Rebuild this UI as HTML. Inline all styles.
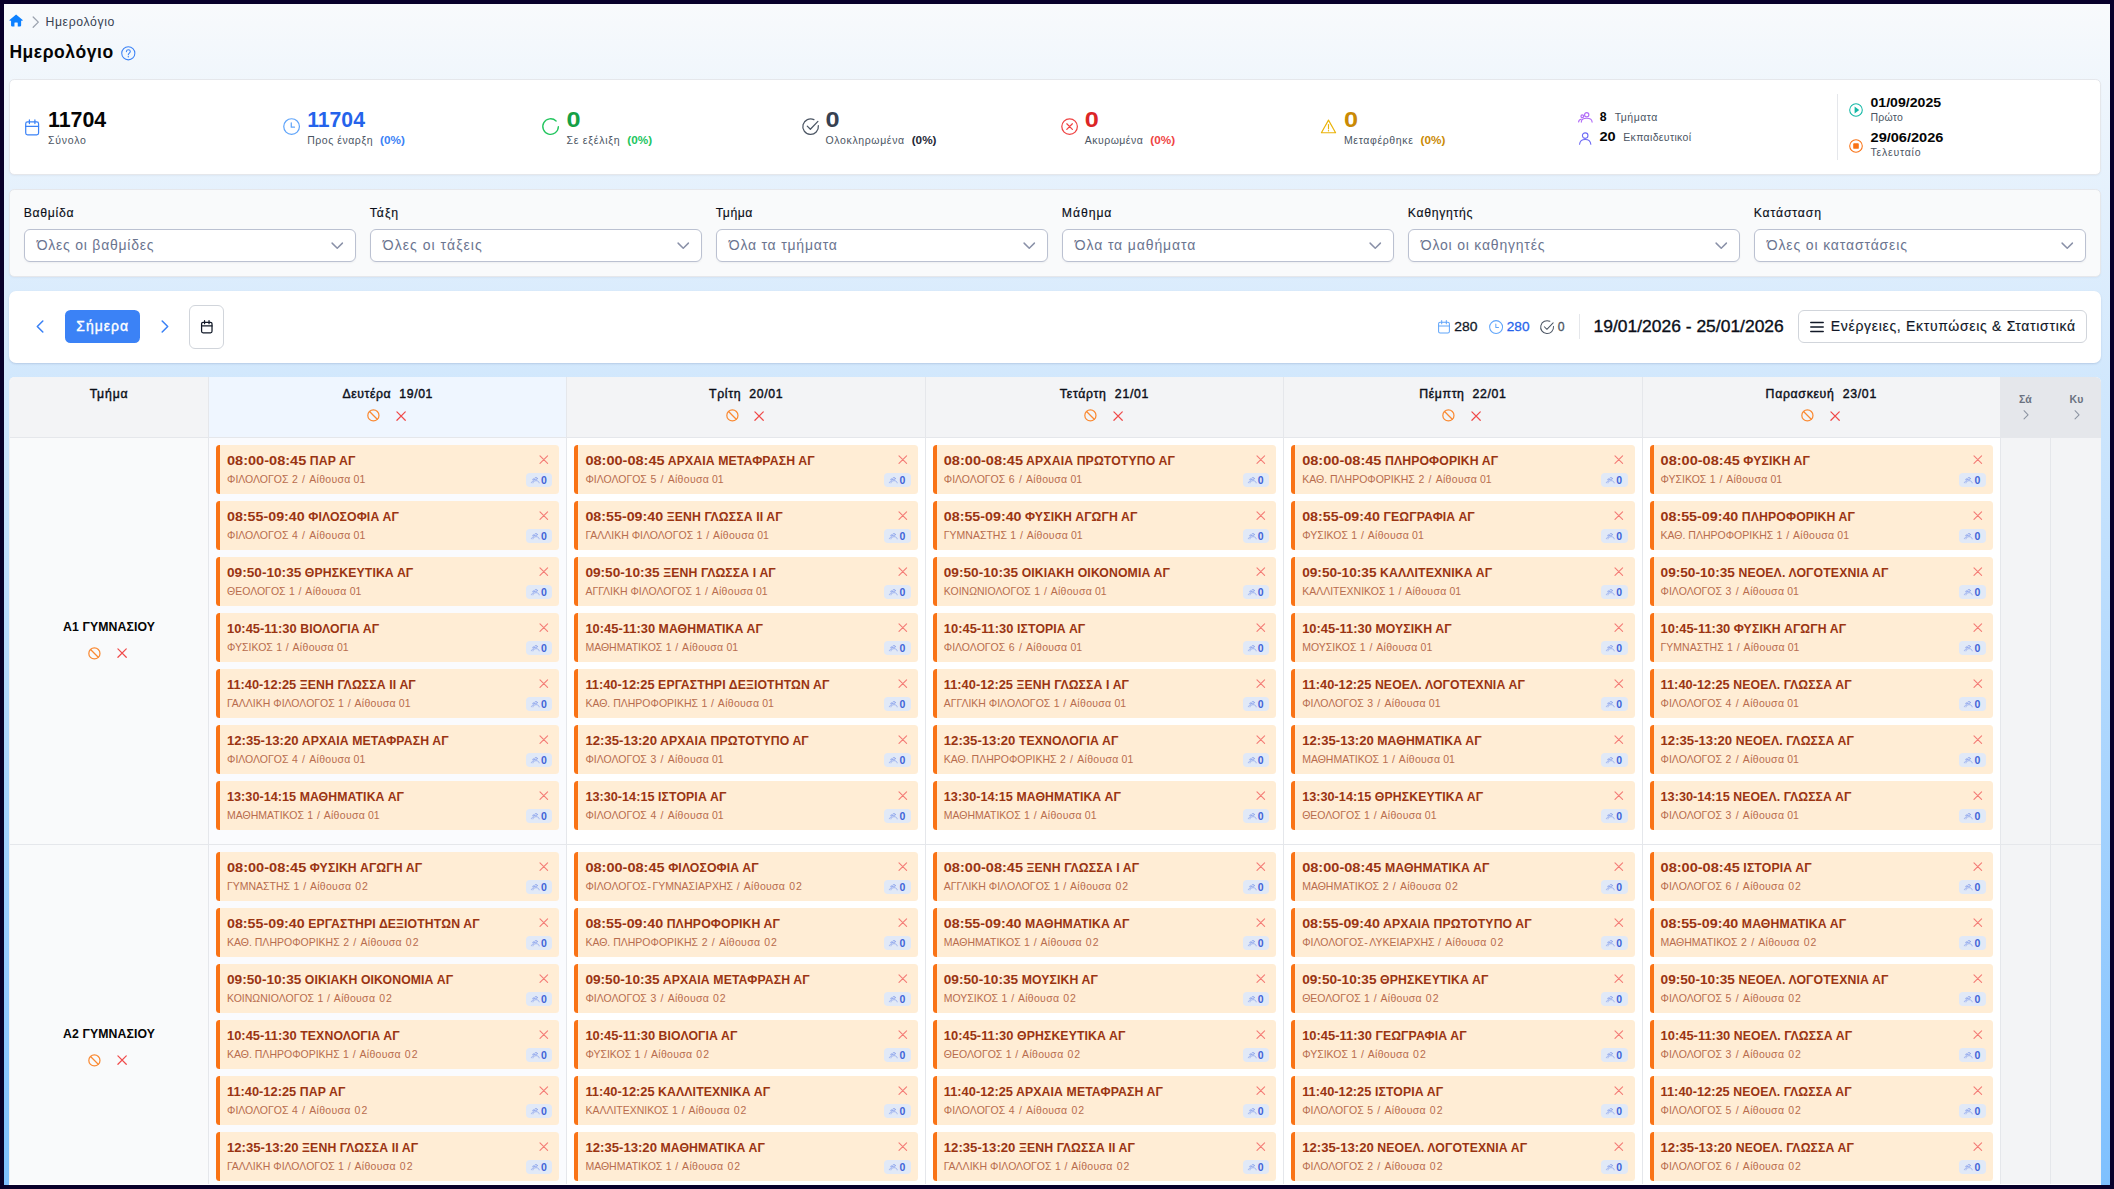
<!DOCTYPE html>
<html lang="el"><head><meta charset="utf-8"><title>Ημερολόγιο</title>
<style>
*{box-sizing:border-box;margin:0;padding:0}
html,body{width:2114px;height:1189px;overflow:hidden;background:#08002a}
body{font-family:"Liberation Sans",sans-serif;font-size:14px;color:#111827;position:relative}
svg{display:block;flex:none;overflow:visible}
.page{position:absolute;left:4px;top:4px;width:2106px;height:1181px;overflow:hidden;
 background:linear-gradient(180deg,#f8fafc 0,#7ec0fe 100%)}
.page>*{position:absolute}
/* coordinates inside .page are target coords minus 4 */
.bc{left:5px;top:11px;height:14px;display:flex;align-items:center;font-size:12.25px;color:#374151}
.ihome{width:14.2px;height:12.6px;color:#0d80ff;margin-top:-4px}
.bcch{width:7.6px;height:12.2px;color:#9ca3af;margin-left:8.7px;margin-right:6px}
.bc span{line-height:14px}
.ttl{left:5.4px;top:36px;height:24px;display:flex;align-items:center}
.ttl h1{font-size:17.5px;font-weight:700;color:#050505;line-height:24px}
.ihelp{width:14.6px;height:14.6px;color:#3b82f6;margin-left:7.6px;margin-top:2px}
.card{left:5.25px;width:2091.5px;border-radius:5.250px;background:#fff;border:1px solid #e5e7eb;box-shadow:0 1px 2px rgba(15,23,42,.04)}
.stats{top:75.400px;height:95.600px}
.filters{top:185.300px;height:88px;background:#f9fafb;border-color:#e5e7eb}
.toolbar{top:287px;height:72px;border:0;border-radius:7px;box-shadow:0 1px 2px rgba(30,58,110,.16)}
.st{position:absolute;top:1px;height:93px;display:flex;align-items:flex-start}
.si{width:17.200px;height:17.200px;margin-right:6.900px;margin-top:36.700px}
.si.cal{width:14.300px;height:16.700px;margin-left:1.450px;margin-right:8.350px;margin-top:37.200px}
.sv{display:block}
.sx{display:inline-block;line-height:0;transform-origin:0 .3465em}
.sn{font-size:21.500px;font-weight:700;line-height:24px;margin-top:26.900px;white-space:nowrap}
.sl{font-size:10.5px;line-height:14px;color:#4b5563;margin-top:1.200px;white-space:nowrap}
.pc{font-weight:700;margin-left:7px}
.s1{left:13.650px}.s1 .si{color:#3b82f6}.s1 .sn{color:#050505}
.s2{left:272.850px}.s2 .si{color:#60a5fa}.s2 .sn{color:#2563eb}.s2 .pc{color:#3b82f6}
.s3{left:532.050px}.s3 .si{color:#22c55e}.s3 .sn{color:#15a045}.s3 .pc{color:#22c55e}
.s4{left:791.250px}.s4 .si{color:#4b5563}.s4 .sn{color:#374151}.s4 .pc{color:#1f2937}
.s5{left:1050.450px}.s5 .si{color:#ef4444}.s5 .sn{color:#dc2626}.s5 .pc{color:#ef4444}
.s6{left:1309.650px}.s6 .si{color:#eab308}.s6 .sn{color:#ca8a04}.s6 .pc{color:#ca8a04}
.s6 .si{width:17px;height:15px;margin-top:37.900px;margin-right:7.100px}
.s7{left:1568px;display:block}
.s7 .ln{position:absolute;left:0;display:flex;align-items:center;height:14px;font-size:10.5px;line-height:14px;color:#4b5563;white-space:nowrap}
.s7 .ln:nth-child(1){top:28.200px}.s7 .ln:nth-child(2){top:48.900px}
.s7 .ui{width:14.800px;height:10.600px;margin-right:6.800px;position:relative;top:.6px}
.s7 .ui.in{width:14.400px;height:12.900px;margin-right:6.800px;top:1.100px}
.s7 .pu{color:#b26cf7}.s7 .in{color:#6d6af5}
.s7 b{font-size:12.25px;color:#050505;margin-right:8px}
.s7 .ln:nth-child(2) b{margin-right:7.600px}
.s8{left:1826.600px;top:14px;height:66px;width:200px;border-left:1px solid #e5e7eb;display:block}
.s8 .dl{position:absolute;left:11.100px;display:flex;align-items:center;height:30px}
.s8 .dl:nth-child(1){top:0}.s8 .dl:nth-child(2){top:35.200px}
.s8 .di{width:14px;height:14px;margin-right:7.600px;margin-top:2px}
.s8 .teal{color:#14b8a6}.s8 .org{color:#f97316}
.s8 b{position:relative;top:1px;display:block;font-size:12.25px;line-height:15px;color:#050505;white-space:nowrap}
.s8 .lb{display:block;font-size:10.5px;line-height:14px;color:#4b5563;white-space:nowrap}
/* filters */
.fl{position:absolute;top:0;width:332px}
.fl:nth-child(1){left:13.500px}.fl:nth-child(2){left:359.500px}.fl:nth-child(3){left:705.500px}.fl:nth-child(4){left:1051.500px}.fl:nth-child(5){left:1397.500px}.fl:nth-child(6){left:1743.500px}
.fl label{position:absolute;left:0;top:14.500px;font-size:12.25px;line-height:16px;color:#0b0f19;-webkit-text-stroke:.15px #0b0f19;white-space:nowrap}
.sel{position:absolute;left:0;top:39px;width:332px;height:33px;border:1px solid #bbc1d1;border-radius:6px;background:#fff;box-shadow:0 1px 2px rgba(15,23,42,.05)}
.sel .ph{position:absolute;left:12px;top:0;line-height:31px;font-size:14px;color:#6b7590;white-space:nowrap}
.chd{position:absolute;right:11px;top:11.300px;width:12.500px;height:7.500px;color:#8a91a8}
/* toolbar */
.tl{position:absolute;left:.9px;top:0;height:70px;width:400px}
.tl>*{position:absolute}
.nav{width:8px;height:13px;color:#3b82f6;top:28.500px}
.tl .nav:nth-of-type(1){left:26px}
.tl .nav:nth-of-type(2){left:151px}
.today{left:55px;top:18.500px;width:75px;height:33px;border:0;border-radius:5.500px;background:#3b82f6;color:#fff;font-family:inherit;font-size:14px;font-weight:400;-webkit-text-stroke:.35px #fff;text-align:center;line-height:32px}
.calbtn{left:179px;top:13.500px;width:35px;height:44.500px;border:1px solid #d1d5db;border-radius:6px;background:#fff}
.cb{position:absolute;left:10.400px;top:14px;width:11.600px;height:13.500px;color:#111827}
.trr{position:absolute;right:13.500px;top:0;height:70px;display:flex;align-items:center}
.m{display:flex;align-items:center;font-size:12.25px;margin-right:10.500px;position:relative;top:1px}
.m b{font-weight:400;-webkit-text-stroke:.3px currentColor;margin-left:3.500px}
.mi{width:14.200px;height:14.200px}
.m1{margin-right:11.600px}.m1 .mi{width:12px;height:13.700px;margin:0 1.100px;color:#60a5fa}.m1 b{color:#111827}
.m2 .mi{color:#60a5fa}.m2 b{color:#2563eb}
.m3 .mi{color:#4b5563}.m3 b{color:#4b5563}
.vd{width:1px;height:25px;background:#e5e7eb;margin:0 14px 0 3.500px;position:relative;top:0}
.range{font-size:15.75px;color:#0b0f19;-webkit-text-stroke:.35px #0b0f19;white-space:nowrap;margin-right:14px}
.actbtn{height:33px;border:1px solid #d1d5db;border-radius:6px;background:#fff;display:flex;align-items:center;padding:0 10.500px 0 11px;font-size:14px;color:#111827;white-space:nowrap}
.actbtn span{-webkit-text-stroke:.15px #111827}
.bars{width:14px;height:12px;margin-right:7px;color:#111827;position:relative;top:.8px}
/* table */
.tbl{left:5.250px;top:373px;width:2091.500px;height:900px;border-radius:5.250px 5.250px 0 0;overflow:hidden;background:#fff;border-left:1px solid #eef0f3}
.tr{display:flex;width:2091.500px;border-bottom:1px solid #e5e7eb}
.tc{flex:none;border-right:1px solid #e5e7eb}
.c0{width:198.750px;background:#f9fafb;display:flex;flex-direction:column;align-items:center;justify-content:center}
.cd{width:358.400px;padding:7px 7px 0 7px;background:#fff}
.cd.first{background:#fafbfe}
.we{width:50px;background:#f3f4f6}
.we:last-child{border-right:0;width:51px}
.hd{height:61px}
.hd .tc{background:#f3f4f6;padding:0;display:block;text-align:center}
.hd .cd.first{background:#eff6ff}
.hd .we{background:#e5e7eb;border-right-color:#e5e7eb}
.hn{font-size:12.25px;font-weight:400;-webkit-text-stroke:.42px #0b0f19;line-height:16px;color:#0b0f19;margin-top:8.600px;white-space:pre}
.ga{display:flex;justify-content:center;align-items:center;margin-top:7.500px;height:13px}
.iban{width:12.800px;height:12.800px;color:#fa8a33;margin:0 7.700px}
.ix{width:10.200px;height:10.200px;color:#f04a4a;margin:0 9.700px 0 8.300px}
.wn{font-size:10.500px;font-weight:700;color:#6b7280;line-height:13px;margin-top:16px}
.wch{width:6.200px;height:9.600px;color:#8b93a1;margin:3.600px auto 0;position:relative;left:1px}
.r1{height:407px}.r2{height:407px}
.gn{font-size:12.25px;font-weight:700;color:#050505;line-height:16px;margin-top:-3px;position:relative;top:-.8px;letter-spacing:.12px}
.tr .c0 .ga{margin-top:10.800px;position:relative;left:-.6px;top:.3px}
.ev{position:relative;height:48.500px;margin-bottom:7.500px;background:#ffedd5;border-left:4px solid #f97316;border-radius:3.500px;padding:0 0 0 7px}
.et{font-size:12.25px;font-weight:700;color:#9a3412;line-height:16px;padding-top:7.800px;white-space:nowrap;letter-spacing:.12px}
.tm{display:inline-block;line-height:0;transform-origin:0 .3465em;letter-spacing:0}
.es{font-size:10.500px;color:#b86c4d;line-height:14px;margin-top:3px;white-space:pre}
.es i{font-style:normal}.hy{letter-spacing:1.400px;margin-left:.7px}.d1{letter-spacing:.45px}.dn{letter-spacing:.66px}.lc{letter-spacing:.3px}.rb{letter-spacing:1px}
.ex{position:absolute;right:10.600px;top:10.100px;width:9.600px;height:9.300px;color:#f47c76}
.bd{position:absolute;right:7px;top:28px;width:26.600px;height:14px;border-radius:4px;background:#e1e9f7;display:flex;align-items:center;padding-left:5.100px;color:#4164d7}
.bu{width:8.600px;height:6.200px;color:#8aa2ec;margin-right:1.500px;margin-top:-.5px}
.bd b{font-size:10.500px;line-height:14px;font-weight:700}
.wl{left:5.250px;top:1180px;width:2091.500px;height:1px;background:#fff;z-index:5}

</style></head>
<body>
<div class="page">
<div class="bc"><svg class="ihome" viewBox="0 0 14 13" ><path d="M7 .4L.2 6.300c-.2.200-.1.600.2.600H1.800v5c0 .5.400.9.900.9h2.600V9.200c0-.3.200-.5.500-.5h2.400c.3 0 .5.200.5.500v3.600h2.600c.5 0 .9-.4.900-.9v-5h1.400c.3 0 .4-.4.200-.6z" fill="currentColor"/></svg><svg class="bcch" viewBox="0 0 8 13" ><path d="M1.200 1l5.500 5.500-5.500 5.500" fill="none" stroke="currentColor" stroke-linecap="round" stroke-linejoin="round" stroke-width="1.350"/></svg><span class="" style="letter-spacing:0.619px">Ημερολόγιο</span></div>
<div class="ttl"><h1><span class="" style="letter-spacing:0.56px">Ημερολόγιο</span></h1><svg class="ihelp" viewBox="0 0 16 16" ><circle cx="8" cy="8" r="7.200" fill="none" stroke="currentColor" stroke-linecap="round" stroke-linejoin="round" stroke-width="1.150"/><path d="M5.900 6.200c.1-1.300 1-2 2.200-2 1.200 0 2.100.8 2.100 1.900 0 1.700-2.200 1.700-2.200 3.500" fill="none" stroke="currentColor" stroke-linecap="round" stroke-linejoin="round" stroke-width="1.150"/><circle cx="8" cy="11.800" r=".75" fill="currentColor"/></svg></div>
<div class="card stats">
<div class="st s1"><svg class="si cal" viewBox="0 0 14 16" ><rect x=".7" y="2.600" width="12.600" height="12.700" rx="1.800" fill="none" stroke="currentColor" stroke-linecap="round" stroke-linejoin="round" stroke-width="1.2"/><path d="M.7 7h12.600M4.300 .7v3.600M9.700 .7v3.600" fill="none" stroke="currentColor" stroke-linecap="round" stroke-linejoin="round" stroke-width="1.2"/></svg><div class="sv"><div class="sn"><span class="sx " style="font-size:21.389px;transform:scaleY(1.0052)">11704</span></div><div class="sl"><span class="" style="letter-spacing:0.769px">Σύνολο</span></div></div></div>
<div class="st s2"><svg class="si" viewBox="0 0 16 16" ><circle cx="8" cy="8" r="7.300" fill="none" stroke="currentColor" stroke-linecap="round" stroke-linejoin="round" stroke-width="1.150"/><path d="M7.700 4.500v4h3" fill="none" stroke="currentColor" stroke-linecap="round" stroke-linejoin="round" stroke-width="1.150"/></svg><div class="sv"><div class="sn"><span class="sx " style="font-size:21.201px;transform:scaleY(1.0141)">11704</span></div><div class="sl"><span class="" style="letter-spacing:0.541px">Προς έναρξη</span><span class="sx pc" style="font-size:11.757px;transform:scaleY(0.8931)">(0%)</span></div></div></div>
<div class="st s3"><svg class="si" viewBox="0 0 16 16" ><path d="M13.130 2.870A7.250 7.250 0 1 0 15.250 8" fill="none" stroke="currentColor" stroke-linecap="round" stroke-linejoin="round" stroke-width="1.250"/></svg><div class="sv"><div class="sn"><span class="sx " style="font-size:25.301px;transform:scaleY(0.8498)">0</span></div><div class="sl"><span class="" style="letter-spacing:0.769px">Σε εξέλιξη</span><span class="sx pc" style="font-size:11.757px;transform:scaleY(0.8931)">(0%)</span></div></div></div>
<div class="st s4"><svg class="si" viewBox="0 0 16 16" ><path d="M15.200 7.200a7.250 7.250 0 1 1-4.100-5.700" fill="none" stroke="currentColor" stroke-linecap="round" stroke-linejoin="round" stroke-width="1.150"/><path d="M4.900 7.600l2.900 2.900 7-7.300" fill="none" stroke="currentColor" stroke-linecap="round" stroke-linejoin="round" stroke-width="1.150"/></svg><div class="sv"><div class="sn"><span class="sx " style="font-size:25.301px;transform:scaleY(0.8498)">0</span></div><div class="sl"><span class="" style="letter-spacing:0.622px">Ολοκληρωμένα</span><span class="sx pc" style="font-size:11.757px;transform:scaleY(0.8931)">(0%)</span></div></div></div>
<div class="st s5"><svg class="si" viewBox="0 0 16 16" ><circle cx="8" cy="8" r="7.250" fill="none" stroke="currentColor" stroke-linecap="round" stroke-linejoin="round" stroke-width="1.150"/><path d="M5.400 5.400l5.200 5.200M10.600 5.400l-5.200 5.200" fill="none" stroke="currentColor" stroke-linecap="round" stroke-linejoin="round" stroke-width="1.150"/></svg><div class="sv"><div class="sn"><span class="sx " style="font-size:25.301px;transform:scaleY(0.8498)">0</span></div><div class="sl"><span class="" style="letter-spacing:0.473px">Ακυρωμένα</span><span class="sx pc" style="font-size:11.757px;transform:scaleY(0.8931)">(0%)</span></div></div></div>
<div class="st s6"><svg class="si" viewBox="0 0 16 15" ><path d="M8 1.100L.9 13.700h14.200z" fill="none" stroke="currentColor" stroke-linecap="round" stroke-linejoin="round" stroke-width="1.150"/><path d="M8 5.600v4.200" fill="none" stroke="currentColor" stroke-linecap="round" stroke-linejoin="round" stroke-width="1.150"/><circle cx="8" cy="11.700" r=".7" fill="currentColor"/></svg><div class="sv"><div class="sn"><span class="sx " style="font-size:25.301px;transform:scaleY(0.8498)">0</span></div><div class="sl"><span class="" style="letter-spacing:0.633px">Μεταφέρθηκε</span><span class="sx pc" style="font-size:11.757px;transform:scaleY(0.8931)">(0%)</span></div></div></div>
<div class="st s7"><div class="ln"><svg class="ui pu" viewBox="0 0 14.8 10.6" ><circle cx="8.700" cy="2.750" r="2.150" fill="none" stroke="currentColor" stroke-linecap="round" stroke-linejoin="round" stroke-width="1.150"/><path d="M3.300 10.100c.1-2.400 2.400-3.800 5.400-3.800s5.300 1.400 5.400 3.800" fill="none" stroke="currentColor" stroke-linecap="round" stroke-linejoin="round" stroke-width="1.150"/><circle cx="4.300" cy="4.300" r="1.350" fill="none" stroke="currentColor" stroke-linecap="round" stroke-linejoin="round" stroke-width="1.150"/><path d="M.6 9.900c.1-1.500 1.100-2.500 2.700-2.700" fill="none" stroke="currentColor" stroke-linecap="round" stroke-linejoin="round" stroke-width="1.150"/></svg><b>8</b><span class="" style="letter-spacing:0.496px">Τμήματα</span></div><div class="ln"><svg class="ui in" viewBox="0 0 14 14" ><circle cx="7" cy="3.900" r="3" fill="none" stroke="currentColor" stroke-linecap="round" stroke-linejoin="round" stroke-width="1.2"/><path d="M.9 13.300c.3-3.300 2.800-5.200 6.100-5.200s5.800 1.900 6.100 5.200" fill="none" stroke="currentColor" stroke-linecap="round" stroke-linejoin="round" stroke-width="1.200"/></svg><b><span class="sx " style="font-size:14.583px;transform:scaleY(0.8400)">20</span></b><span class="" style="letter-spacing:0.334px">Εκπαιδευτικοί</span></div></div>
<div class="st s8"><div class="dl"><svg class="di teal" viewBox="0 0 16 16" ><circle cx="8" cy="8" r="7.200" fill="none" stroke="currentColor" stroke-linecap="round" stroke-linejoin="round" stroke-width="1.200"/><path d="M6.400 4v8l5.300-4z" fill="currentColor"/></svg><div><b><span class="sx " style="font-size:14.104px;transform:scaleY(0.8686)">01/09/2025</span></b><span class="lb" style="letter-spacing:0.189px">Πρώτο</span></div></div><div class="dl"><svg class="di org" viewBox="0 0 16 16" ><circle cx="8" cy="8" r="7.200" fill="none" stroke="currentColor" stroke-linecap="round" stroke-linejoin="round" stroke-width="1.200"/><rect x="4.800" y="4.800" width="6.400" height="6.400" rx="1" fill="currentColor"/></svg><div><b><span class="sx " style="font-size:14.570px;transform:scaleY(0.8408)">29/06/2026</span></b><span class="lb" style="letter-spacing:0.768px">Τελευταίο</span></div></div></div>
</div>
<div class="card filters">
<div class="fl"><label><span class="" style="letter-spacing:0.676px">Βαθμίδα</span></label><div class="sel"><span class="ph" style="letter-spacing:0.76px">Όλες οι βαθμίδες</span><svg class="chd" viewBox="0 0 13 8" ><path d="M1 1.200l5.500 5.500L12 1.200" fill="none" stroke="currentColor" stroke-linecap="round" stroke-linejoin="round" stroke-width="1.550"/></svg></div></div>
<div class="fl"><label><span class="" style="letter-spacing:0.961px">Τάξη</span></label><div class="sel"><span class="ph" style="letter-spacing:1.046px">Όλες οι τάξεις</span><svg class="chd" viewBox="0 0 13 8" ><path d="M1 1.200l5.500 5.500L12 1.200" fill="none" stroke="currentColor" stroke-linecap="round" stroke-linejoin="round" stroke-width="1.550"/></svg></div></div>
<div class="fl"><label><span class="" style="letter-spacing:0.526px">Τμήμα</span></label><div class="sel"><span class="ph" style="letter-spacing:0.785px">Όλα τα τμήματα</span><svg class="chd" viewBox="0 0 13 8" ><path d="M1 1.200l5.500 5.500L12 1.200" fill="none" stroke="currentColor" stroke-linecap="round" stroke-linejoin="round" stroke-width="1.550"/></svg></div></div>
<div class="fl"><label><span class="" style="letter-spacing:0.93px">Μάθημα</span></label><div class="sel"><span class="ph" style="letter-spacing:0.882px">Όλα τα μαθήματα</span><svg class="chd" viewBox="0 0 13 8" ><path d="M1 1.200l5.500 5.500L12 1.200" fill="none" stroke="currentColor" stroke-linecap="round" stroke-linejoin="round" stroke-width="1.550"/></svg></div></div>
<div class="fl"><label><span class="" style="letter-spacing:0.672px">Καθηγητής</span></label><div class="sel"><span class="ph" style="letter-spacing:0.794px">Όλοι οι καθηγητές</span><svg class="chd" viewBox="0 0 13 8" ><path d="M1 1.200l5.500 5.500L12 1.200" fill="none" stroke="currentColor" stroke-linecap="round" stroke-linejoin="round" stroke-width="1.550"/></svg></div></div>
<div class="fl"><label><span class="" style="letter-spacing:0.833px">Κατάσταση</span></label><div class="sel"><span class="ph" style="letter-spacing:0.863px">Όλες οι καταστάσεις</span><svg class="chd" viewBox="0 0 13 8" ><path d="M1 1.200l5.500 5.500L12 1.200" fill="none" stroke="currentColor" stroke-linecap="round" stroke-linejoin="round" stroke-width="1.550"/></svg></div></div>
</div>
<div class="card toolbar">
<div class="tl"><svg class="nav" viewBox="0 0 8 13" ><path d="M6.800 1L1.300 6.500l5.500 5.500" fill="none" stroke="currentColor" stroke-linecap="round" stroke-linejoin="round" stroke-width="1.550"/></svg><button class="today"><span class="" style="letter-spacing:0.999px">Σήμερα</span></button><svg class="nav" viewBox="0 0 8 13" ><path d="M1.200 1l5.500 5.500-5.500 5.500" fill="none" stroke="currentColor" stroke-linecap="round" stroke-linejoin="round" stroke-width="1.550"/></svg><div class="calbtn"><svg class="cb" viewBox="0 0 14 16" ><rect x=".7" y="2.600" width="12.600" height="12.700" rx="1.800" fill="none" stroke="currentColor" stroke-linecap="round" stroke-linejoin="round" stroke-width="1.500"/><path d="M.7 7h12.600M4.300 .7v3.600M9.700 .7v3.600" fill="none" stroke="currentColor" stroke-linecap="round" stroke-linejoin="round" stroke-width="1.500"/></svg></div></div>
<div class="trr"><span class="m m1"><svg class="mi" viewBox="0 0 14 16" ><rect x=".7" y="2.600" width="12.600" height="12.700" rx="1.800" fill="none" stroke="currentColor" stroke-linecap="round" stroke-linejoin="round" stroke-width="1.2"/><path d="M.7 7h12.600M4.300 .7v3.600M9.700 .7v3.600" fill="none" stroke="currentColor" stroke-linecap="round" stroke-linejoin="round" stroke-width="1.2"/></svg><b><span class="sx " style="font-size:13.888px;transform:scaleY(0.8820)">280</span></b></span><span class="m m2"><svg class="mi" viewBox="0 0 16 16" ><circle cx="8" cy="8" r="7.300" fill="none" stroke="currentColor" stroke-linecap="round" stroke-linejoin="round" stroke-width="1.150"/><path d="M7.700 4.500v4h3" fill="none" stroke="currentColor" stroke-linecap="round" stroke-linejoin="round" stroke-width="1.150"/></svg><b><span class="sx " style="font-size:13.638px;transform:scaleY(0.8982)">280</span></b></span><span class="m m3"><svg class="mi" viewBox="0 0 16 16" ><path d="M15.200 7.200a7.250 7.250 0 1 1-4.100-5.700" fill="none" stroke="currentColor" stroke-linecap="round" stroke-linejoin="round" stroke-width="1.150"/><path d="M4.900 7.600l2.900 2.900 7-7.300" fill="none" stroke="currentColor" stroke-linecap="round" stroke-linejoin="round" stroke-width="1.150"/></svg><b>0</b></span><span class="vd"></span><span class="sx range" style="font-size:17.463px;transform:scaleY(0.9019)">19/01/2026 - 25/01/2026</span><div class="actbtn"><svg class="bars" viewBox="0 0 14 12" ><path d="M.8 1.600h12.400M.8 6h12.400M.8 10.400h12.400" fill="none" stroke="currentColor" stroke-linecap="round" stroke-linejoin="round" stroke-width="1.500"/></svg><span class="" style="letter-spacing:0.685px">Ενέργειες, Εκτυπώσεις &amp; Στατιστικά</span></div></div>
</div>
<div class="tbl">
<div class="tr hd"><div class="tc c0"><div class="hn"><span class="" style="letter-spacing:0.851px">Τμήμα</span></div></div>
<div class="tc cd first"><div class="hn"><span class="" style="letter-spacing:0.603px">Δευτέρα  19/01</span></div><div class="ga"><svg class="iban" viewBox="0 0 14 14" ><circle cx="7" cy="7" r="6.100" fill="none" stroke="currentColor" stroke-linecap="round" stroke-linejoin="round" stroke-width="1.350"/><path d="M2.800 2.800l8.400 8.400" fill="none" stroke="currentColor" stroke-linecap="round" stroke-linejoin="round" stroke-width="1.350"/></svg><svg class="ix" viewBox="0 0 10 10" ><path d="M.9 .9l8.200 8.200M9.100 .9l-8.200 8.200" fill="none" stroke="currentColor" stroke-linecap="round" stroke-linejoin="round" stroke-width="1.200"/></svg></div></div>
<div class="tc cd"><div class="hn"><span class="" style="letter-spacing:0.656px">Τρίτη  20/01</span></div><div class="ga"><svg class="iban" viewBox="0 0 14 14" ><circle cx="7" cy="7" r="6.100" fill="none" stroke="currentColor" stroke-linecap="round" stroke-linejoin="round" stroke-width="1.350"/><path d="M2.800 2.800l8.400 8.400" fill="none" stroke="currentColor" stroke-linecap="round" stroke-linejoin="round" stroke-width="1.350"/></svg><svg class="ix" viewBox="0 0 10 10" ><path d="M.9 .9l8.200 8.200M9.100 .9l-8.200 8.200" fill="none" stroke="currentColor" stroke-linecap="round" stroke-linejoin="round" stroke-width="1.200"/></svg></div></div>
<div class="tc cd"><div class="hn"><span class="" style="letter-spacing:0.711px">Τετάρτη  21/01</span></div><div class="ga"><svg class="iban" viewBox="0 0 14 14" ><circle cx="7" cy="7" r="6.100" fill="none" stroke="currentColor" stroke-linecap="round" stroke-linejoin="round" stroke-width="1.350"/><path d="M2.800 2.800l8.400 8.400" fill="none" stroke="currentColor" stroke-linecap="round" stroke-linejoin="round" stroke-width="1.350"/></svg><svg class="ix" viewBox="0 0 10 10" ><path d="M.9 .9l8.200 8.200M9.100 .9l-8.200 8.200" fill="none" stroke="currentColor" stroke-linecap="round" stroke-linejoin="round" stroke-width="1.200"/></svg></div></div>
<div class="tc cd"><div class="hn"><span class="" style="letter-spacing:0.631px">Πέμπτη  22/01</span></div><div class="ga"><svg class="iban" viewBox="0 0 14 14" ><circle cx="7" cy="7" r="6.100" fill="none" stroke="currentColor" stroke-linecap="round" stroke-linejoin="round" stroke-width="1.350"/><path d="M2.800 2.800l8.400 8.400" fill="none" stroke="currentColor" stroke-linecap="round" stroke-linejoin="round" stroke-width="1.350"/></svg><svg class="ix" viewBox="0 0 10 10" ><path d="M.9 .9l8.200 8.200M9.100 .9l-8.200 8.200" fill="none" stroke="currentColor" stroke-linecap="round" stroke-linejoin="round" stroke-width="1.200"/></svg></div></div>
<div class="tc cd"><div class="hn"><span class="" style="letter-spacing:0.7px">Παρασκευή  23/01</span></div><div class="ga"><svg class="iban" viewBox="0 0 14 14" ><circle cx="7" cy="7" r="6.100" fill="none" stroke="currentColor" stroke-linecap="round" stroke-linejoin="round" stroke-width="1.350"/><path d="M2.800 2.800l8.400 8.400" fill="none" stroke="currentColor" stroke-linecap="round" stroke-linejoin="round" stroke-width="1.350"/></svg><svg class="ix" viewBox="0 0 10 10" ><path d="M.9 .9l8.200 8.200M9.100 .9l-8.200 8.200" fill="none" stroke="currentColor" stroke-linecap="round" stroke-linejoin="round" stroke-width="1.200"/></svg></div></div>
<div class="tc we"><div class="wn">Σά</div><svg class="wch" viewBox="0 0 8 13" ><path d="M1.200 1l5.500 5.500-5.500 5.500" fill="none" stroke="currentColor" stroke-linecap="round" stroke-linejoin="round" stroke-width="1.400"/></svg></div><div class="tc we"><div class="wn">Κυ</div><svg class="wch" viewBox="0 0 8 13" ><path d="M1.200 1l5.500 5.500-5.500 5.500" fill="none" stroke="currentColor" stroke-linecap="round" stroke-linejoin="round" stroke-width="1.400"/></svg></div>
</div>
<div class="tr r1">
<div class="tc c0"><div class="gn">Α1 ΓΥΜΝΑΣΙΟΥ</div><div class="ga"><svg class="iban" viewBox="0 0 14 14" ><circle cx="7" cy="7" r="6.100" fill="none" stroke="currentColor" stroke-linecap="round" stroke-linejoin="round" stroke-width="1.350"/><path d="M2.800 2.800l8.400 8.400" fill="none" stroke="currentColor" stroke-linecap="round" stroke-linejoin="round" stroke-width="1.350"/></svg><svg class="ix" viewBox="0 0 10 10" ><path d="M.9 .9l8.200 8.200M9.100 .9l-8.200 8.200" fill="none" stroke="currentColor" stroke-linecap="round" stroke-linejoin="round" stroke-width="1.200"/></svg></div></div>
<div class="tc cd first">
<div class="ev"><div class="et"><span class="tm" style="font-size:14.568px;transform:scaleY(0.8409)">08:00-08:45</span> ΠΑΡ ΑΓ</div><div class="es">ΦΙΛΟΛΟΓΟΣ<i class="dn"> 2 / </i><i class="lc">Αίθουσα</i><i class="ra"> 01</i></div><svg class="ex" viewBox="0 0 10 10" ><path d="M.9 .9l8.200 8.200M9.100 .9l-8.200 8.200" fill="none" stroke="currentColor" stroke-linecap="round" stroke-linejoin="round" stroke-width="1.200"/></svg><span class="bd"><svg class="bu" viewBox="0 0 14.8 10.6" ><circle cx="8.700" cy="2.750" r="2.150" fill="none" stroke="currentColor" stroke-linecap="round" stroke-linejoin="round" stroke-width="1.250"/><path d="M3.300 10.100c.1-2.400 2.400-3.800 5.400-3.800s5.300 1.400 5.400 3.800" fill="none" stroke="currentColor" stroke-linecap="round" stroke-linejoin="round" stroke-width="1.250"/><circle cx="4.300" cy="4.300" r="1.350" fill="none" stroke="currentColor" stroke-linecap="round" stroke-linejoin="round" stroke-width="1.250"/><path d="M.6 9.900c.1-1.500 1.100-2.500 2.700-2.700" fill="none" stroke="currentColor" stroke-linecap="round" stroke-linejoin="round" stroke-width="1.250"/></svg><b>0</b></span></div>
<div class="ev"><div class="et"><span class="tm" style="font-size:14.289px;transform:scaleY(0.8573)">08:55-09:40</span> ΦΙΛΟΣΟΦΙΑ ΑΓ</div><div class="es">ΦΙΛΟΛΟΓΟΣ<i class="dn"> 4 / </i><i class="lc">Αίθουσα</i><i class="ra"> 01</i></div><svg class="ex" viewBox="0 0 10 10" ><path d="M.9 .9l8.200 8.200M9.100 .9l-8.200 8.200" fill="none" stroke="currentColor" stroke-linecap="round" stroke-linejoin="round" stroke-width="1.200"/></svg><span class="bd"><svg class="bu" viewBox="0 0 14.8 10.6" ><circle cx="8.700" cy="2.750" r="2.150" fill="none" stroke="currentColor" stroke-linecap="round" stroke-linejoin="round" stroke-width="1.250"/><path d="M3.300 10.100c.1-2.400 2.400-3.800 5.400-3.800s5.300 1.400 5.400 3.800" fill="none" stroke="currentColor" stroke-linecap="round" stroke-linejoin="round" stroke-width="1.250"/><circle cx="4.300" cy="4.300" r="1.350" fill="none" stroke="currentColor" stroke-linecap="round" stroke-linejoin="round" stroke-width="1.250"/><path d="M.6 9.900c.1-1.500 1.100-2.500 2.700-2.700" fill="none" stroke="currentColor" stroke-linecap="round" stroke-linejoin="round" stroke-width="1.250"/></svg><b>0</b></span></div>
<div class="ev"><div class="et"><span class="tm" style="font-size:13.656px;transform:scaleY(0.8970)">09:50-10:35</span> ΘΡΗΣΚΕΥΤΙΚΑ ΑΓ</div><div class="es">ΘΕΟΛΟΓΟΣ<i class="d1"> 1 / </i><i class="lc">Αίθουσα</i><i class="ra"> 01</i></div><svg class="ex" viewBox="0 0 10 10" ><path d="M.9 .9l8.200 8.200M9.100 .9l-8.200 8.200" fill="none" stroke="currentColor" stroke-linecap="round" stroke-linejoin="round" stroke-width="1.200"/></svg><span class="bd"><svg class="bu" viewBox="0 0 14.8 10.6" ><circle cx="8.700" cy="2.750" r="2.150" fill="none" stroke="currentColor" stroke-linecap="round" stroke-linejoin="round" stroke-width="1.250"/><path d="M3.300 10.100c.1-2.400 2.400-3.800 5.400-3.800s5.300 1.400 5.400 3.800" fill="none" stroke="currentColor" stroke-linecap="round" stroke-linejoin="round" stroke-width="1.250"/><circle cx="4.300" cy="4.300" r="1.350" fill="none" stroke="currentColor" stroke-linecap="round" stroke-linejoin="round" stroke-width="1.250"/><path d="M.6 9.900c.1-1.500 1.100-2.500 2.700-2.700" fill="none" stroke="currentColor" stroke-linecap="round" stroke-linejoin="round" stroke-width="1.250"/></svg><b>0</b></span></div>
<div class="ev"><div class="et"><span class="tm" style="font-size:12.933px;transform:scaleY(0.9472)">10:45-11:30</span> ΒΙΟΛΟΓΙΑ ΑΓ</div><div class="es">ΦΥΣΙΚΟΣ<i class="d1"> 1 / </i><i class="lc">Αίθουσα</i><i class="ra"> 01</i></div><svg class="ex" viewBox="0 0 10 10" ><path d="M.9 .9l8.200 8.200M9.100 .9l-8.200 8.200" fill="none" stroke="currentColor" stroke-linecap="round" stroke-linejoin="round" stroke-width="1.200"/></svg><span class="bd"><svg class="bu" viewBox="0 0 14.8 10.6" ><circle cx="8.700" cy="2.750" r="2.150" fill="none" stroke="currentColor" stroke-linecap="round" stroke-linejoin="round" stroke-width="1.250"/><path d="M3.300 10.100c.1-2.400 2.400-3.800 5.400-3.800s5.300 1.400 5.400 3.800" fill="none" stroke="currentColor" stroke-linecap="round" stroke-linejoin="round" stroke-width="1.250"/><circle cx="4.300" cy="4.300" r="1.350" fill="none" stroke="currentColor" stroke-linecap="round" stroke-linejoin="round" stroke-width="1.250"/><path d="M.6 9.900c.1-1.500 1.100-2.500 2.700-2.700" fill="none" stroke="currentColor" stroke-linecap="round" stroke-linejoin="round" stroke-width="1.250"/></svg><b>0</b></span></div>
<div class="ev"><div class="et"><span class="tm" style="font-size:12.839px;transform:scaleY(0.9541)">11:40-12:25</span> ΞΕΝΗ ΓΛΩΣΣΑ ΙΙ ΑΓ</div><div class="es">ΓΑΛΛΙΚΗ ΦΙΛΟΛΟΓΟΣ<i class="d1"> 1 / </i><i class="lc">Αίθουσα</i><i class="ra"> 01</i></div><svg class="ex" viewBox="0 0 10 10" ><path d="M.9 .9l8.200 8.200M9.100 .9l-8.200 8.200" fill="none" stroke="currentColor" stroke-linecap="round" stroke-linejoin="round" stroke-width="1.200"/></svg><span class="bd"><svg class="bu" viewBox="0 0 14.8 10.6" ><circle cx="8.700" cy="2.750" r="2.150" fill="none" stroke="currentColor" stroke-linecap="round" stroke-linejoin="round" stroke-width="1.250"/><path d="M3.300 10.100c.1-2.400 2.400-3.800 5.400-3.800s5.300 1.400 5.400 3.800" fill="none" stroke="currentColor" stroke-linecap="round" stroke-linejoin="round" stroke-width="1.250"/><circle cx="4.300" cy="4.300" r="1.350" fill="none" stroke="currentColor" stroke-linecap="round" stroke-linejoin="round" stroke-width="1.250"/><path d="M.6 9.900c.1-1.500 1.100-2.500 2.700-2.700" fill="none" stroke="currentColor" stroke-linecap="round" stroke-linejoin="round" stroke-width="1.250"/></svg><b>0</b></span></div>
<div class="ev"><div class="et"><span class="tm" style="font-size:13.154px;transform:scaleY(0.9313)">12:35-13:20</span> ΑΡΧΑΙΑ ΜΕΤΑΦΡΑΣΗ ΑΓ</div><div class="es">ΦΙΛΟΛΟΓΟΣ<i class="dn"> 4 / </i><i class="lc">Αίθουσα</i><i class="ra"> 01</i></div><svg class="ex" viewBox="0 0 10 10" ><path d="M.9 .9l8.200 8.200M9.100 .9l-8.200 8.200" fill="none" stroke="currentColor" stroke-linecap="round" stroke-linejoin="round" stroke-width="1.200"/></svg><span class="bd"><svg class="bu" viewBox="0 0 14.8 10.6" ><circle cx="8.700" cy="2.750" r="2.150" fill="none" stroke="currentColor" stroke-linecap="round" stroke-linejoin="round" stroke-width="1.250"/><path d="M3.300 10.100c.1-2.400 2.400-3.800 5.400-3.800s5.300 1.400 5.400 3.800" fill="none" stroke="currentColor" stroke-linecap="round" stroke-linejoin="round" stroke-width="1.250"/><circle cx="4.300" cy="4.300" r="1.350" fill="none" stroke="currentColor" stroke-linecap="round" stroke-linejoin="round" stroke-width="1.250"/><path d="M.6 9.900c.1-1.500 1.100-2.500 2.700-2.700" fill="none" stroke="currentColor" stroke-linecap="round" stroke-linejoin="round" stroke-width="1.250"/></svg><b>0</b></span></div>
<div class="ev"><div class="et"><span class="tm" style="font-size:12.708px;transform:scaleY(0.9640)">13:30-14:15</span> ΜΑΘΗΜΑΤΙΚΑ ΑΓ</div><div class="es">ΜΑΘΗΜΑΤΙΚΟΣ<i class="d1"> 1 / </i><i class="lc">Αίθουσα</i><i class="ra"> 01</i></div><svg class="ex" viewBox="0 0 10 10" ><path d="M.9 .9l8.200 8.200M9.100 .9l-8.200 8.200" fill="none" stroke="currentColor" stroke-linecap="round" stroke-linejoin="round" stroke-width="1.200"/></svg><span class="bd"><svg class="bu" viewBox="0 0 14.8 10.6" ><circle cx="8.700" cy="2.750" r="2.150" fill="none" stroke="currentColor" stroke-linecap="round" stroke-linejoin="round" stroke-width="1.250"/><path d="M3.300 10.100c.1-2.400 2.400-3.800 5.400-3.800s5.300 1.400 5.400 3.800" fill="none" stroke="currentColor" stroke-linecap="round" stroke-linejoin="round" stroke-width="1.250"/><circle cx="4.300" cy="4.300" r="1.350" fill="none" stroke="currentColor" stroke-linecap="round" stroke-linejoin="round" stroke-width="1.250"/><path d="M.6 9.900c.1-1.500 1.100-2.500 2.700-2.700" fill="none" stroke="currentColor" stroke-linecap="round" stroke-linejoin="round" stroke-width="1.250"/></svg><b>0</b></span></div>
</div>
<div class="tc cd">
<div class="ev"><div class="et"><span class="tm" style="font-size:14.568px;transform:scaleY(0.8409)">08:00-08:45</span> ΑΡΧΑΙΑ ΜΕΤΑΦΡΑΣΗ ΑΓ</div><div class="es">ΦΙΛΟΛΟΓΟΣ<i class="dn"> 5 / </i><i class="lc">Αίθουσα</i><i class="ra"> 01</i></div><svg class="ex" viewBox="0 0 10 10" ><path d="M.9 .9l8.200 8.200M9.100 .9l-8.200 8.200" fill="none" stroke="currentColor" stroke-linecap="round" stroke-linejoin="round" stroke-width="1.200"/></svg><span class="bd"><svg class="bu" viewBox="0 0 14.8 10.6" ><circle cx="8.700" cy="2.750" r="2.150" fill="none" stroke="currentColor" stroke-linecap="round" stroke-linejoin="round" stroke-width="1.250"/><path d="M3.300 10.100c.1-2.400 2.400-3.800 5.400-3.800s5.300 1.400 5.400 3.800" fill="none" stroke="currentColor" stroke-linecap="round" stroke-linejoin="round" stroke-width="1.250"/><circle cx="4.300" cy="4.300" r="1.350" fill="none" stroke="currentColor" stroke-linecap="round" stroke-linejoin="round" stroke-width="1.250"/><path d="M.6 9.900c.1-1.500 1.100-2.500 2.700-2.700" fill="none" stroke="currentColor" stroke-linecap="round" stroke-linejoin="round" stroke-width="1.250"/></svg><b>0</b></span></div>
<div class="ev"><div class="et"><span class="tm" style="font-size:14.289px;transform:scaleY(0.8573)">08:55-09:40</span> ΞΕΝΗ ΓΛΩΣΣΑ ΙΙ ΑΓ</div><div class="es">ΓΑΛΛΙΚΗ ΦΙΛΟΛΟΓΟΣ<i class="d1"> 1 / </i><i class="lc">Αίθουσα</i><i class="ra"> 01</i></div><svg class="ex" viewBox="0 0 10 10" ><path d="M.9 .9l8.200 8.200M9.100 .9l-8.200 8.200" fill="none" stroke="currentColor" stroke-linecap="round" stroke-linejoin="round" stroke-width="1.200"/></svg><span class="bd"><svg class="bu" viewBox="0 0 14.8 10.6" ><circle cx="8.700" cy="2.750" r="2.150" fill="none" stroke="currentColor" stroke-linecap="round" stroke-linejoin="round" stroke-width="1.250"/><path d="M3.300 10.100c.1-2.400 2.400-3.800 5.400-3.800s5.300 1.400 5.400 3.800" fill="none" stroke="currentColor" stroke-linecap="round" stroke-linejoin="round" stroke-width="1.250"/><circle cx="4.300" cy="4.300" r="1.350" fill="none" stroke="currentColor" stroke-linecap="round" stroke-linejoin="round" stroke-width="1.250"/><path d="M.6 9.900c.1-1.500 1.100-2.500 2.700-2.700" fill="none" stroke="currentColor" stroke-linecap="round" stroke-linejoin="round" stroke-width="1.250"/></svg><b>0</b></span></div>
<div class="ev"><div class="et"><span class="tm" style="font-size:13.656px;transform:scaleY(0.8970)">09:50-10:35</span> ΞΕΝΗ ΓΛΩΣΣΑ Ι ΑΓ</div><div class="es">ΑΓΓΛΙΚΗ ΦΙΛΟΛΟΓΟΣ<i class="d1"> 1 / </i><i class="lc">Αίθουσα</i><i class="ra"> 01</i></div><svg class="ex" viewBox="0 0 10 10" ><path d="M.9 .9l8.200 8.200M9.100 .9l-8.200 8.200" fill="none" stroke="currentColor" stroke-linecap="round" stroke-linejoin="round" stroke-width="1.200"/></svg><span class="bd"><svg class="bu" viewBox="0 0 14.8 10.6" ><circle cx="8.700" cy="2.750" r="2.150" fill="none" stroke="currentColor" stroke-linecap="round" stroke-linejoin="round" stroke-width="1.250"/><path d="M3.300 10.100c.1-2.400 2.400-3.800 5.400-3.800s5.300 1.400 5.400 3.800" fill="none" stroke="currentColor" stroke-linecap="round" stroke-linejoin="round" stroke-width="1.250"/><circle cx="4.300" cy="4.300" r="1.350" fill="none" stroke="currentColor" stroke-linecap="round" stroke-linejoin="round" stroke-width="1.250"/><path d="M.6 9.900c.1-1.500 1.100-2.500 2.700-2.700" fill="none" stroke="currentColor" stroke-linecap="round" stroke-linejoin="round" stroke-width="1.250"/></svg><b>0</b></span></div>
<div class="ev"><div class="et"><span class="tm" style="font-size:12.933px;transform:scaleY(0.9472)">10:45-11:30</span> ΜΑΘΗΜΑΤΙΚΑ ΑΓ</div><div class="es">ΜΑΘΗΜΑΤΙΚΟΣ<i class="d1"> 1 / </i><i class="lc">Αίθουσα</i><i class="ra"> 01</i></div><svg class="ex" viewBox="0 0 10 10" ><path d="M.9 .9l8.200 8.200M9.100 .9l-8.200 8.200" fill="none" stroke="currentColor" stroke-linecap="round" stroke-linejoin="round" stroke-width="1.200"/></svg><span class="bd"><svg class="bu" viewBox="0 0 14.8 10.6" ><circle cx="8.700" cy="2.750" r="2.150" fill="none" stroke="currentColor" stroke-linecap="round" stroke-linejoin="round" stroke-width="1.250"/><path d="M3.300 10.100c.1-2.400 2.400-3.800 5.400-3.800s5.300 1.400 5.400 3.800" fill="none" stroke="currentColor" stroke-linecap="round" stroke-linejoin="round" stroke-width="1.250"/><circle cx="4.300" cy="4.300" r="1.350" fill="none" stroke="currentColor" stroke-linecap="round" stroke-linejoin="round" stroke-width="1.250"/><path d="M.6 9.900c.1-1.500 1.100-2.500 2.700-2.700" fill="none" stroke="currentColor" stroke-linecap="round" stroke-linejoin="round" stroke-width="1.250"/></svg><b>0</b></span></div>
<div class="ev"><div class="et"><span class="tm" style="font-size:12.839px;transform:scaleY(0.9541)">11:40-12:25</span> ΕΡΓΑΣΤΗΡΙ ΔΕΞΙΟΤΗΤΩΝ ΑΓ</div><div class="es">ΚΑΘ. ΠΛΗΡΟΦΟΡΙΚΗΣ<i class="d1"> 1 / </i><i class="lc">Αίθουσα</i><i class="ra"> 01</i></div><svg class="ex" viewBox="0 0 10 10" ><path d="M.9 .9l8.200 8.200M9.100 .9l-8.200 8.200" fill="none" stroke="currentColor" stroke-linecap="round" stroke-linejoin="round" stroke-width="1.200"/></svg><span class="bd"><svg class="bu" viewBox="0 0 14.8 10.6" ><circle cx="8.700" cy="2.750" r="2.150" fill="none" stroke="currentColor" stroke-linecap="round" stroke-linejoin="round" stroke-width="1.250"/><path d="M3.300 10.100c.1-2.400 2.400-3.800 5.400-3.800s5.300 1.400 5.400 3.800" fill="none" stroke="currentColor" stroke-linecap="round" stroke-linejoin="round" stroke-width="1.250"/><circle cx="4.300" cy="4.300" r="1.350" fill="none" stroke="currentColor" stroke-linecap="round" stroke-linejoin="round" stroke-width="1.250"/><path d="M.6 9.900c.1-1.500 1.100-2.500 2.700-2.700" fill="none" stroke="currentColor" stroke-linecap="round" stroke-linejoin="round" stroke-width="1.250"/></svg><b>0</b></span></div>
<div class="ev"><div class="et"><span class="tm" style="font-size:13.154px;transform:scaleY(0.9313)">12:35-13:20</span> ΑΡΧΑΙΑ ΠΡΩΤΟΤΥΠΟ ΑΓ</div><div class="es">ΦΙΛΟΛΟΓΟΣ<i class="dn"> 3 / </i><i class="lc">Αίθουσα</i><i class="ra"> 01</i></div><svg class="ex" viewBox="0 0 10 10" ><path d="M.9 .9l8.200 8.200M9.100 .9l-8.200 8.200" fill="none" stroke="currentColor" stroke-linecap="round" stroke-linejoin="round" stroke-width="1.200"/></svg><span class="bd"><svg class="bu" viewBox="0 0 14.8 10.6" ><circle cx="8.700" cy="2.750" r="2.150" fill="none" stroke="currentColor" stroke-linecap="round" stroke-linejoin="round" stroke-width="1.250"/><path d="M3.300 10.100c.1-2.400 2.400-3.800 5.400-3.800s5.300 1.400 5.400 3.800" fill="none" stroke="currentColor" stroke-linecap="round" stroke-linejoin="round" stroke-width="1.250"/><circle cx="4.300" cy="4.300" r="1.350" fill="none" stroke="currentColor" stroke-linecap="round" stroke-linejoin="round" stroke-width="1.250"/><path d="M.6 9.900c.1-1.500 1.100-2.500 2.700-2.700" fill="none" stroke="currentColor" stroke-linecap="round" stroke-linejoin="round" stroke-width="1.250"/></svg><b>0</b></span></div>
<div class="ev"><div class="et"><span class="tm" style="font-size:12.708px;transform:scaleY(0.9640)">13:30-14:15</span> ΙΣΤΟΡΙΑ ΑΓ</div><div class="es">ΦΙΛΟΛΟΓΟΣ<i class="dn"> 4 / </i><i class="lc">Αίθουσα</i><i class="ra"> 01</i></div><svg class="ex" viewBox="0 0 10 10" ><path d="M.9 .9l8.200 8.200M9.100 .9l-8.200 8.200" fill="none" stroke="currentColor" stroke-linecap="round" stroke-linejoin="round" stroke-width="1.200"/></svg><span class="bd"><svg class="bu" viewBox="0 0 14.8 10.6" ><circle cx="8.700" cy="2.750" r="2.150" fill="none" stroke="currentColor" stroke-linecap="round" stroke-linejoin="round" stroke-width="1.250"/><path d="M3.300 10.100c.1-2.400 2.400-3.800 5.400-3.800s5.300 1.400 5.400 3.800" fill="none" stroke="currentColor" stroke-linecap="round" stroke-linejoin="round" stroke-width="1.250"/><circle cx="4.300" cy="4.300" r="1.350" fill="none" stroke="currentColor" stroke-linecap="round" stroke-linejoin="round" stroke-width="1.250"/><path d="M.6 9.900c.1-1.500 1.100-2.500 2.700-2.700" fill="none" stroke="currentColor" stroke-linecap="round" stroke-linejoin="round" stroke-width="1.250"/></svg><b>0</b></span></div>
</div>
<div class="tc cd">
<div class="ev"><div class="et"><span class="tm" style="font-size:14.568px;transform:scaleY(0.8409)">08:00-08:45</span> ΑΡΧΑΙΑ ΠΡΩΤΟΤΥΠΟ ΑΓ</div><div class="es">ΦΙΛΟΛΟΓΟΣ<i class="dn"> 6 / </i><i class="lc">Αίθουσα</i><i class="ra"> 01</i></div><svg class="ex" viewBox="0 0 10 10" ><path d="M.9 .9l8.200 8.200M9.100 .9l-8.200 8.200" fill="none" stroke="currentColor" stroke-linecap="round" stroke-linejoin="round" stroke-width="1.200"/></svg><span class="bd"><svg class="bu" viewBox="0 0 14.8 10.6" ><circle cx="8.700" cy="2.750" r="2.150" fill="none" stroke="currentColor" stroke-linecap="round" stroke-linejoin="round" stroke-width="1.250"/><path d="M3.300 10.100c.1-2.400 2.400-3.800 5.400-3.800s5.300 1.400 5.400 3.800" fill="none" stroke="currentColor" stroke-linecap="round" stroke-linejoin="round" stroke-width="1.250"/><circle cx="4.300" cy="4.300" r="1.350" fill="none" stroke="currentColor" stroke-linecap="round" stroke-linejoin="round" stroke-width="1.250"/><path d="M.6 9.900c.1-1.500 1.100-2.500 2.700-2.700" fill="none" stroke="currentColor" stroke-linecap="round" stroke-linejoin="round" stroke-width="1.250"/></svg><b>0</b></span></div>
<div class="ev"><div class="et"><span class="tm" style="font-size:14.289px;transform:scaleY(0.8573)">08:55-09:40</span> ΦΥΣΙΚΗ ΑΓΩΓΗ ΑΓ</div><div class="es">ΓΥΜΝΑΣΤΗΣ<i class="d1"> 1 / </i><i class="lc">Αίθουσα</i><i class="ra"> 01</i></div><svg class="ex" viewBox="0 0 10 10" ><path d="M.9 .9l8.200 8.200M9.100 .9l-8.200 8.200" fill="none" stroke="currentColor" stroke-linecap="round" stroke-linejoin="round" stroke-width="1.200"/></svg><span class="bd"><svg class="bu" viewBox="0 0 14.8 10.6" ><circle cx="8.700" cy="2.750" r="2.150" fill="none" stroke="currentColor" stroke-linecap="round" stroke-linejoin="round" stroke-width="1.250"/><path d="M3.300 10.100c.1-2.400 2.400-3.800 5.400-3.800s5.300 1.400 5.400 3.800" fill="none" stroke="currentColor" stroke-linecap="round" stroke-linejoin="round" stroke-width="1.250"/><circle cx="4.300" cy="4.300" r="1.350" fill="none" stroke="currentColor" stroke-linecap="round" stroke-linejoin="round" stroke-width="1.250"/><path d="M.6 9.900c.1-1.500 1.100-2.500 2.700-2.700" fill="none" stroke="currentColor" stroke-linecap="round" stroke-linejoin="round" stroke-width="1.250"/></svg><b>0</b></span></div>
<div class="ev"><div class="et"><span class="tm" style="font-size:13.656px;transform:scaleY(0.8970)">09:50-10:35</span> ΟΙΚΙΑΚΗ ΟΙΚΟΝΟΜΙΑ ΑΓ</div><div class="es">ΚΟΙΝΩΝΙΟΛΟΓΟΣ<i class="d1"> 1 / </i><i class="lc">Αίθουσα</i><i class="ra"> 01</i></div><svg class="ex" viewBox="0 0 10 10" ><path d="M.9 .9l8.200 8.200M9.100 .9l-8.200 8.200" fill="none" stroke="currentColor" stroke-linecap="round" stroke-linejoin="round" stroke-width="1.200"/></svg><span class="bd"><svg class="bu" viewBox="0 0 14.8 10.6" ><circle cx="8.700" cy="2.750" r="2.150" fill="none" stroke="currentColor" stroke-linecap="round" stroke-linejoin="round" stroke-width="1.250"/><path d="M3.300 10.100c.1-2.400 2.400-3.800 5.400-3.800s5.300 1.400 5.400 3.800" fill="none" stroke="currentColor" stroke-linecap="round" stroke-linejoin="round" stroke-width="1.250"/><circle cx="4.300" cy="4.300" r="1.350" fill="none" stroke="currentColor" stroke-linecap="round" stroke-linejoin="round" stroke-width="1.250"/><path d="M.6 9.900c.1-1.500 1.100-2.500 2.700-2.700" fill="none" stroke="currentColor" stroke-linecap="round" stroke-linejoin="round" stroke-width="1.250"/></svg><b>0</b></span></div>
<div class="ev"><div class="et"><span class="tm" style="font-size:12.933px;transform:scaleY(0.9472)">10:45-11:30</span> ΙΣΤΟΡΙΑ ΑΓ</div><div class="es">ΦΙΛΟΛΟΓΟΣ<i class="dn"> 6 / </i><i class="lc">Αίθουσα</i><i class="ra"> 01</i></div><svg class="ex" viewBox="0 0 10 10" ><path d="M.9 .9l8.200 8.200M9.100 .9l-8.200 8.200" fill="none" stroke="currentColor" stroke-linecap="round" stroke-linejoin="round" stroke-width="1.200"/></svg><span class="bd"><svg class="bu" viewBox="0 0 14.8 10.6" ><circle cx="8.700" cy="2.750" r="2.150" fill="none" stroke="currentColor" stroke-linecap="round" stroke-linejoin="round" stroke-width="1.250"/><path d="M3.300 10.100c.1-2.400 2.400-3.800 5.400-3.800s5.300 1.400 5.400 3.800" fill="none" stroke="currentColor" stroke-linecap="round" stroke-linejoin="round" stroke-width="1.250"/><circle cx="4.300" cy="4.300" r="1.350" fill="none" stroke="currentColor" stroke-linecap="round" stroke-linejoin="round" stroke-width="1.250"/><path d="M.6 9.900c.1-1.500 1.100-2.500 2.700-2.700" fill="none" stroke="currentColor" stroke-linecap="round" stroke-linejoin="round" stroke-width="1.250"/></svg><b>0</b></span></div>
<div class="ev"><div class="et"><span class="tm" style="font-size:12.839px;transform:scaleY(0.9541)">11:40-12:25</span> ΞΕΝΗ ΓΛΩΣΣΑ Ι ΑΓ</div><div class="es">ΑΓΓΛΙΚΗ ΦΙΛΟΛΟΓΟΣ<i class="d1"> 1 / </i><i class="lc">Αίθουσα</i><i class="ra"> 01</i></div><svg class="ex" viewBox="0 0 10 10" ><path d="M.9 .9l8.200 8.200M9.100 .9l-8.200 8.200" fill="none" stroke="currentColor" stroke-linecap="round" stroke-linejoin="round" stroke-width="1.200"/></svg><span class="bd"><svg class="bu" viewBox="0 0 14.8 10.6" ><circle cx="8.700" cy="2.750" r="2.150" fill="none" stroke="currentColor" stroke-linecap="round" stroke-linejoin="round" stroke-width="1.250"/><path d="M3.300 10.100c.1-2.400 2.400-3.800 5.400-3.800s5.300 1.400 5.400 3.800" fill="none" stroke="currentColor" stroke-linecap="round" stroke-linejoin="round" stroke-width="1.250"/><circle cx="4.300" cy="4.300" r="1.350" fill="none" stroke="currentColor" stroke-linecap="round" stroke-linejoin="round" stroke-width="1.250"/><path d="M.6 9.900c.1-1.500 1.100-2.500 2.700-2.700" fill="none" stroke="currentColor" stroke-linecap="round" stroke-linejoin="round" stroke-width="1.250"/></svg><b>0</b></span></div>
<div class="ev"><div class="et"><span class="tm" style="font-size:13.154px;transform:scaleY(0.9313)">12:35-13:20</span> ΤΕΧΝΟΛΟΓΙΑ ΑΓ</div><div class="es">ΚΑΘ. ΠΛΗΡΟΦΟΡΙΚΗΣ<i class="dn"> 2 / </i><i class="lc">Αίθουσα</i><i class="ra"> 01</i></div><svg class="ex" viewBox="0 0 10 10" ><path d="M.9 .9l8.200 8.200M9.100 .9l-8.200 8.200" fill="none" stroke="currentColor" stroke-linecap="round" stroke-linejoin="round" stroke-width="1.200"/></svg><span class="bd"><svg class="bu" viewBox="0 0 14.8 10.6" ><circle cx="8.700" cy="2.750" r="2.150" fill="none" stroke="currentColor" stroke-linecap="round" stroke-linejoin="round" stroke-width="1.250"/><path d="M3.300 10.100c.1-2.400 2.400-3.800 5.400-3.800s5.300 1.400 5.400 3.800" fill="none" stroke="currentColor" stroke-linecap="round" stroke-linejoin="round" stroke-width="1.250"/><circle cx="4.300" cy="4.300" r="1.350" fill="none" stroke="currentColor" stroke-linecap="round" stroke-linejoin="round" stroke-width="1.250"/><path d="M.6 9.900c.1-1.500 1.100-2.500 2.700-2.700" fill="none" stroke="currentColor" stroke-linecap="round" stroke-linejoin="round" stroke-width="1.250"/></svg><b>0</b></span></div>
<div class="ev"><div class="et"><span class="tm" style="font-size:12.708px;transform:scaleY(0.9640)">13:30-14:15</span> ΜΑΘΗΜΑΤΙΚΑ ΑΓ</div><div class="es">ΜΑΘΗΜΑΤΙΚΟΣ<i class="d1"> 1 / </i><i class="lc">Αίθουσα</i><i class="ra"> 01</i></div><svg class="ex" viewBox="0 0 10 10" ><path d="M.9 .9l8.200 8.200M9.100 .9l-8.200 8.200" fill="none" stroke="currentColor" stroke-linecap="round" stroke-linejoin="round" stroke-width="1.200"/></svg><span class="bd"><svg class="bu" viewBox="0 0 14.8 10.6" ><circle cx="8.700" cy="2.750" r="2.150" fill="none" stroke="currentColor" stroke-linecap="round" stroke-linejoin="round" stroke-width="1.250"/><path d="M3.300 10.100c.1-2.400 2.400-3.800 5.400-3.800s5.300 1.400 5.400 3.800" fill="none" stroke="currentColor" stroke-linecap="round" stroke-linejoin="round" stroke-width="1.250"/><circle cx="4.300" cy="4.300" r="1.350" fill="none" stroke="currentColor" stroke-linecap="round" stroke-linejoin="round" stroke-width="1.250"/><path d="M.6 9.900c.1-1.500 1.100-2.500 2.700-2.700" fill="none" stroke="currentColor" stroke-linecap="round" stroke-linejoin="round" stroke-width="1.250"/></svg><b>0</b></span></div>
</div>
<div class="tc cd">
<div class="ev"><div class="et"><span class="tm" style="font-size:14.568px;transform:scaleY(0.8409)">08:00-08:45</span> ΠΛΗΡΟΦΟΡΙΚΗ ΑΓ</div><div class="es">ΚΑΘ. ΠΛΗΡΟΦΟΡΙΚΗΣ<i class="dn"> 2 / </i><i class="lc">Αίθουσα</i><i class="ra"> 01</i></div><svg class="ex" viewBox="0 0 10 10" ><path d="M.9 .9l8.200 8.200M9.100 .9l-8.200 8.200" fill="none" stroke="currentColor" stroke-linecap="round" stroke-linejoin="round" stroke-width="1.200"/></svg><span class="bd"><svg class="bu" viewBox="0 0 14.8 10.6" ><circle cx="8.700" cy="2.750" r="2.150" fill="none" stroke="currentColor" stroke-linecap="round" stroke-linejoin="round" stroke-width="1.250"/><path d="M3.300 10.100c.1-2.400 2.400-3.800 5.400-3.800s5.300 1.400 5.400 3.800" fill="none" stroke="currentColor" stroke-linecap="round" stroke-linejoin="round" stroke-width="1.250"/><circle cx="4.300" cy="4.300" r="1.350" fill="none" stroke="currentColor" stroke-linecap="round" stroke-linejoin="round" stroke-width="1.250"/><path d="M.6 9.900c.1-1.500 1.100-2.500 2.700-2.700" fill="none" stroke="currentColor" stroke-linecap="round" stroke-linejoin="round" stroke-width="1.250"/></svg><b>0</b></span></div>
<div class="ev"><div class="et"><span class="tm" style="font-size:14.289px;transform:scaleY(0.8573)">08:55-09:40</span> ΓΕΩΓΡΑΦΙΑ ΑΓ</div><div class="es">ΦΥΣΙΚΟΣ<i class="d1"> 1 / </i><i class="lc">Αίθουσα</i><i class="ra"> 01</i></div><svg class="ex" viewBox="0 0 10 10" ><path d="M.9 .9l8.200 8.200M9.100 .9l-8.200 8.200" fill="none" stroke="currentColor" stroke-linecap="round" stroke-linejoin="round" stroke-width="1.200"/></svg><span class="bd"><svg class="bu" viewBox="0 0 14.8 10.6" ><circle cx="8.700" cy="2.750" r="2.150" fill="none" stroke="currentColor" stroke-linecap="round" stroke-linejoin="round" stroke-width="1.250"/><path d="M3.300 10.100c.1-2.400 2.400-3.800 5.400-3.800s5.300 1.400 5.400 3.800" fill="none" stroke="currentColor" stroke-linecap="round" stroke-linejoin="round" stroke-width="1.250"/><circle cx="4.300" cy="4.300" r="1.350" fill="none" stroke="currentColor" stroke-linecap="round" stroke-linejoin="round" stroke-width="1.250"/><path d="M.6 9.900c.1-1.500 1.100-2.500 2.700-2.700" fill="none" stroke="currentColor" stroke-linecap="round" stroke-linejoin="round" stroke-width="1.250"/></svg><b>0</b></span></div>
<div class="ev"><div class="et"><span class="tm" style="font-size:13.656px;transform:scaleY(0.8970)">09:50-10:35</span> ΚΑΛΛΙΤΕΧΝΙΚΑ ΑΓ</div><div class="es">ΚΑΛΛΙΤΕΧΝΙΚΟΣ<i class="d1"> 1 / </i><i class="lc">Αίθουσα</i><i class="ra"> 01</i></div><svg class="ex" viewBox="0 0 10 10" ><path d="M.9 .9l8.200 8.200M9.100 .9l-8.200 8.200" fill="none" stroke="currentColor" stroke-linecap="round" stroke-linejoin="round" stroke-width="1.200"/></svg><span class="bd"><svg class="bu" viewBox="0 0 14.8 10.6" ><circle cx="8.700" cy="2.750" r="2.150" fill="none" stroke="currentColor" stroke-linecap="round" stroke-linejoin="round" stroke-width="1.250"/><path d="M3.300 10.100c.1-2.400 2.400-3.800 5.400-3.800s5.300 1.400 5.400 3.800" fill="none" stroke="currentColor" stroke-linecap="round" stroke-linejoin="round" stroke-width="1.250"/><circle cx="4.300" cy="4.300" r="1.350" fill="none" stroke="currentColor" stroke-linecap="round" stroke-linejoin="round" stroke-width="1.250"/><path d="M.6 9.900c.1-1.500 1.100-2.500 2.700-2.700" fill="none" stroke="currentColor" stroke-linecap="round" stroke-linejoin="round" stroke-width="1.250"/></svg><b>0</b></span></div>
<div class="ev"><div class="et"><span class="tm" style="font-size:12.933px;transform:scaleY(0.9472)">10:45-11:30</span> ΜΟΥΣΙΚΗ ΑΓ</div><div class="es">ΜΟΥΣΙΚΟΣ<i class="d1"> 1 / </i><i class="lc">Αίθουσα</i><i class="ra"> 01</i></div><svg class="ex" viewBox="0 0 10 10" ><path d="M.9 .9l8.200 8.200M9.100 .9l-8.200 8.200" fill="none" stroke="currentColor" stroke-linecap="round" stroke-linejoin="round" stroke-width="1.200"/></svg><span class="bd"><svg class="bu" viewBox="0 0 14.8 10.6" ><circle cx="8.700" cy="2.750" r="2.150" fill="none" stroke="currentColor" stroke-linecap="round" stroke-linejoin="round" stroke-width="1.250"/><path d="M3.300 10.100c.1-2.400 2.400-3.800 5.400-3.800s5.300 1.400 5.400 3.800" fill="none" stroke="currentColor" stroke-linecap="round" stroke-linejoin="round" stroke-width="1.250"/><circle cx="4.300" cy="4.300" r="1.350" fill="none" stroke="currentColor" stroke-linecap="round" stroke-linejoin="round" stroke-width="1.250"/><path d="M.6 9.900c.1-1.500 1.100-2.500 2.700-2.700" fill="none" stroke="currentColor" stroke-linecap="round" stroke-linejoin="round" stroke-width="1.250"/></svg><b>0</b></span></div>
<div class="ev"><div class="et"><span class="tm" style="font-size:12.839px;transform:scaleY(0.9541)">11:40-12:25</span> ΝΕΟΕΛ. ΛΟΓΟΤΕΧΝΙΑ ΑΓ</div><div class="es">ΦΙΛΟΛΟΓΟΣ<i class="dn"> 3 / </i><i class="lc">Αίθουσα</i><i class="ra"> 01</i></div><svg class="ex" viewBox="0 0 10 10" ><path d="M.9 .9l8.200 8.200M9.100 .9l-8.200 8.200" fill="none" stroke="currentColor" stroke-linecap="round" stroke-linejoin="round" stroke-width="1.200"/></svg><span class="bd"><svg class="bu" viewBox="0 0 14.8 10.6" ><circle cx="8.700" cy="2.750" r="2.150" fill="none" stroke="currentColor" stroke-linecap="round" stroke-linejoin="round" stroke-width="1.250"/><path d="M3.300 10.100c.1-2.400 2.400-3.800 5.400-3.800s5.300 1.400 5.400 3.800" fill="none" stroke="currentColor" stroke-linecap="round" stroke-linejoin="round" stroke-width="1.250"/><circle cx="4.300" cy="4.300" r="1.350" fill="none" stroke="currentColor" stroke-linecap="round" stroke-linejoin="round" stroke-width="1.250"/><path d="M.6 9.900c.1-1.500 1.100-2.500 2.700-2.700" fill="none" stroke="currentColor" stroke-linecap="round" stroke-linejoin="round" stroke-width="1.250"/></svg><b>0</b></span></div>
<div class="ev"><div class="et"><span class="tm" style="font-size:13.154px;transform:scaleY(0.9313)">12:35-13:20</span> ΜΑΘΗΜΑΤΙΚΑ ΑΓ</div><div class="es">ΜΑΘΗΜΑΤΙΚΟΣ<i class="d1"> 1 / </i><i class="lc">Αίθουσα</i><i class="ra"> 01</i></div><svg class="ex" viewBox="0 0 10 10" ><path d="M.9 .9l8.200 8.200M9.100 .9l-8.200 8.200" fill="none" stroke="currentColor" stroke-linecap="round" stroke-linejoin="round" stroke-width="1.200"/></svg><span class="bd"><svg class="bu" viewBox="0 0 14.8 10.6" ><circle cx="8.700" cy="2.750" r="2.150" fill="none" stroke="currentColor" stroke-linecap="round" stroke-linejoin="round" stroke-width="1.250"/><path d="M3.300 10.100c.1-2.400 2.400-3.800 5.400-3.800s5.300 1.400 5.400 3.800" fill="none" stroke="currentColor" stroke-linecap="round" stroke-linejoin="round" stroke-width="1.250"/><circle cx="4.300" cy="4.300" r="1.350" fill="none" stroke="currentColor" stroke-linecap="round" stroke-linejoin="round" stroke-width="1.250"/><path d="M.6 9.900c.1-1.500 1.100-2.500 2.700-2.700" fill="none" stroke="currentColor" stroke-linecap="round" stroke-linejoin="round" stroke-width="1.250"/></svg><b>0</b></span></div>
<div class="ev"><div class="et"><span class="tm" style="font-size:12.708px;transform:scaleY(0.9640)">13:30-14:15</span> ΘΡΗΣΚΕΥΤΙΚΑ ΑΓ</div><div class="es">ΘΕΟΛΟΓΟΣ<i class="d1"> 1 / </i><i class="lc">Αίθουσα</i><i class="ra"> 01</i></div><svg class="ex" viewBox="0 0 10 10" ><path d="M.9 .9l8.200 8.200M9.100 .9l-8.200 8.200" fill="none" stroke="currentColor" stroke-linecap="round" stroke-linejoin="round" stroke-width="1.200"/></svg><span class="bd"><svg class="bu" viewBox="0 0 14.8 10.6" ><circle cx="8.700" cy="2.750" r="2.150" fill="none" stroke="currentColor" stroke-linecap="round" stroke-linejoin="round" stroke-width="1.250"/><path d="M3.300 10.100c.1-2.400 2.400-3.800 5.400-3.800s5.300 1.400 5.400 3.800" fill="none" stroke="currentColor" stroke-linecap="round" stroke-linejoin="round" stroke-width="1.250"/><circle cx="4.300" cy="4.300" r="1.350" fill="none" stroke="currentColor" stroke-linecap="round" stroke-linejoin="round" stroke-width="1.250"/><path d="M.6 9.900c.1-1.500 1.100-2.500 2.700-2.700" fill="none" stroke="currentColor" stroke-linecap="round" stroke-linejoin="round" stroke-width="1.250"/></svg><b>0</b></span></div>
</div>
<div class="tc cd">
<div class="ev"><div class="et"><span class="tm" style="font-size:14.568px;transform:scaleY(0.8409)">08:00-08:45</span> ΦΥΣΙΚΗ ΑΓ</div><div class="es">ΦΥΣΙΚΟΣ<i class="d1"> 1 / </i><i class="lc">Αίθουσα</i><i class="ra"> 01</i></div><svg class="ex" viewBox="0 0 10 10" ><path d="M.9 .9l8.200 8.200M9.100 .9l-8.200 8.200" fill="none" stroke="currentColor" stroke-linecap="round" stroke-linejoin="round" stroke-width="1.200"/></svg><span class="bd"><svg class="bu" viewBox="0 0 14.8 10.6" ><circle cx="8.700" cy="2.750" r="2.150" fill="none" stroke="currentColor" stroke-linecap="round" stroke-linejoin="round" stroke-width="1.250"/><path d="M3.300 10.100c.1-2.400 2.400-3.800 5.400-3.800s5.300 1.400 5.400 3.800" fill="none" stroke="currentColor" stroke-linecap="round" stroke-linejoin="round" stroke-width="1.250"/><circle cx="4.300" cy="4.300" r="1.350" fill="none" stroke="currentColor" stroke-linecap="round" stroke-linejoin="round" stroke-width="1.250"/><path d="M.6 9.900c.1-1.500 1.100-2.500 2.700-2.700" fill="none" stroke="currentColor" stroke-linecap="round" stroke-linejoin="round" stroke-width="1.250"/></svg><b>0</b></span></div>
<div class="ev"><div class="et"><span class="tm" style="font-size:14.289px;transform:scaleY(0.8573)">08:55-09:40</span> ΠΛΗΡΟΦΟΡΙΚΗ ΑΓ</div><div class="es">ΚΑΘ. ΠΛΗΡΟΦΟΡΙΚΗΣ<i class="d1"> 1 / </i><i class="lc">Αίθουσα</i><i class="ra"> 01</i></div><svg class="ex" viewBox="0 0 10 10" ><path d="M.9 .9l8.200 8.200M9.100 .9l-8.200 8.200" fill="none" stroke="currentColor" stroke-linecap="round" stroke-linejoin="round" stroke-width="1.200"/></svg><span class="bd"><svg class="bu" viewBox="0 0 14.8 10.6" ><circle cx="8.700" cy="2.750" r="2.150" fill="none" stroke="currentColor" stroke-linecap="round" stroke-linejoin="round" stroke-width="1.250"/><path d="M3.300 10.100c.1-2.400 2.400-3.800 5.400-3.800s5.300 1.400 5.400 3.800" fill="none" stroke="currentColor" stroke-linecap="round" stroke-linejoin="round" stroke-width="1.250"/><circle cx="4.300" cy="4.300" r="1.350" fill="none" stroke="currentColor" stroke-linecap="round" stroke-linejoin="round" stroke-width="1.250"/><path d="M.6 9.900c.1-1.500 1.100-2.500 2.700-2.700" fill="none" stroke="currentColor" stroke-linecap="round" stroke-linejoin="round" stroke-width="1.250"/></svg><b>0</b></span></div>
<div class="ev"><div class="et"><span class="tm" style="font-size:13.656px;transform:scaleY(0.8970)">09:50-10:35</span> ΝΕΟΕΛ. ΛΟΓΟΤΕΧΝΙΑ ΑΓ</div><div class="es">ΦΙΛΟΛΟΓΟΣ<i class="dn"> 3 / </i><i class="lc">Αίθουσα</i><i class="ra"> 01</i></div><svg class="ex" viewBox="0 0 10 10" ><path d="M.9 .9l8.200 8.200M9.100 .9l-8.200 8.200" fill="none" stroke="currentColor" stroke-linecap="round" stroke-linejoin="round" stroke-width="1.200"/></svg><span class="bd"><svg class="bu" viewBox="0 0 14.8 10.6" ><circle cx="8.700" cy="2.750" r="2.150" fill="none" stroke="currentColor" stroke-linecap="round" stroke-linejoin="round" stroke-width="1.250"/><path d="M3.300 10.100c.1-2.400 2.400-3.800 5.400-3.800s5.300 1.400 5.400 3.800" fill="none" stroke="currentColor" stroke-linecap="round" stroke-linejoin="round" stroke-width="1.250"/><circle cx="4.300" cy="4.300" r="1.350" fill="none" stroke="currentColor" stroke-linecap="round" stroke-linejoin="round" stroke-width="1.250"/><path d="M.6 9.900c.1-1.500 1.100-2.500 2.700-2.700" fill="none" stroke="currentColor" stroke-linecap="round" stroke-linejoin="round" stroke-width="1.250"/></svg><b>0</b></span></div>
<div class="ev"><div class="et"><span class="tm" style="font-size:12.933px;transform:scaleY(0.9472)">10:45-11:30</span> ΦΥΣΙΚΗ ΑΓΩΓΗ ΑΓ</div><div class="es">ΓΥΜΝΑΣΤΗΣ<i class="d1"> 1 / </i><i class="lc">Αίθουσα</i><i class="ra"> 01</i></div><svg class="ex" viewBox="0 0 10 10" ><path d="M.9 .9l8.200 8.200M9.100 .9l-8.200 8.200" fill="none" stroke="currentColor" stroke-linecap="round" stroke-linejoin="round" stroke-width="1.200"/></svg><span class="bd"><svg class="bu" viewBox="0 0 14.8 10.6" ><circle cx="8.700" cy="2.750" r="2.150" fill="none" stroke="currentColor" stroke-linecap="round" stroke-linejoin="round" stroke-width="1.250"/><path d="M3.300 10.100c.1-2.400 2.400-3.800 5.400-3.800s5.300 1.400 5.400 3.800" fill="none" stroke="currentColor" stroke-linecap="round" stroke-linejoin="round" stroke-width="1.250"/><circle cx="4.300" cy="4.300" r="1.350" fill="none" stroke="currentColor" stroke-linecap="round" stroke-linejoin="round" stroke-width="1.250"/><path d="M.6 9.900c.1-1.500 1.100-2.500 2.700-2.700" fill="none" stroke="currentColor" stroke-linecap="round" stroke-linejoin="round" stroke-width="1.250"/></svg><b>0</b></span></div>
<div class="ev"><div class="et"><span class="tm" style="font-size:12.839px;transform:scaleY(0.9541)">11:40-12:25</span> ΝΕΟΕΛ. ΓΛΩΣΣΑ ΑΓ</div><div class="es">ΦΙΛΟΛΟΓΟΣ<i class="dn"> 4 / </i><i class="lc">Αίθουσα</i><i class="ra"> 01</i></div><svg class="ex" viewBox="0 0 10 10" ><path d="M.9 .9l8.200 8.200M9.100 .9l-8.200 8.200" fill="none" stroke="currentColor" stroke-linecap="round" stroke-linejoin="round" stroke-width="1.200"/></svg><span class="bd"><svg class="bu" viewBox="0 0 14.8 10.6" ><circle cx="8.700" cy="2.750" r="2.150" fill="none" stroke="currentColor" stroke-linecap="round" stroke-linejoin="round" stroke-width="1.250"/><path d="M3.300 10.100c.1-2.400 2.400-3.800 5.400-3.800s5.300 1.400 5.400 3.800" fill="none" stroke="currentColor" stroke-linecap="round" stroke-linejoin="round" stroke-width="1.250"/><circle cx="4.300" cy="4.300" r="1.350" fill="none" stroke="currentColor" stroke-linecap="round" stroke-linejoin="round" stroke-width="1.250"/><path d="M.6 9.900c.1-1.500 1.100-2.500 2.700-2.700" fill="none" stroke="currentColor" stroke-linecap="round" stroke-linejoin="round" stroke-width="1.250"/></svg><b>0</b></span></div>
<div class="ev"><div class="et"><span class="tm" style="font-size:13.154px;transform:scaleY(0.9313)">12:35-13:20</span> ΝΕΟΕΛ. ΓΛΩΣΣΑ ΑΓ</div><div class="es">ΦΙΛΟΛΟΓΟΣ<i class="dn"> 2 / </i><i class="lc">Αίθουσα</i><i class="ra"> 01</i></div><svg class="ex" viewBox="0 0 10 10" ><path d="M.9 .9l8.200 8.200M9.100 .9l-8.200 8.200" fill="none" stroke="currentColor" stroke-linecap="round" stroke-linejoin="round" stroke-width="1.200"/></svg><span class="bd"><svg class="bu" viewBox="0 0 14.8 10.6" ><circle cx="8.700" cy="2.750" r="2.150" fill="none" stroke="currentColor" stroke-linecap="round" stroke-linejoin="round" stroke-width="1.250"/><path d="M3.300 10.100c.1-2.400 2.400-3.800 5.400-3.800s5.300 1.400 5.400 3.800" fill="none" stroke="currentColor" stroke-linecap="round" stroke-linejoin="round" stroke-width="1.250"/><circle cx="4.300" cy="4.300" r="1.350" fill="none" stroke="currentColor" stroke-linecap="round" stroke-linejoin="round" stroke-width="1.250"/><path d="M.6 9.900c.1-1.500 1.100-2.500 2.700-2.700" fill="none" stroke="currentColor" stroke-linecap="round" stroke-linejoin="round" stroke-width="1.250"/></svg><b>0</b></span></div>
<div class="ev"><div class="et"><span class="tm" style="font-size:12.708px;transform:scaleY(0.9640)">13:30-14:15</span> ΝΕΟΕΛ. ΓΛΩΣΣΑ ΑΓ</div><div class="es">ΦΙΛΟΛΟΓΟΣ<i class="dn"> 3 / </i><i class="lc">Αίθουσα</i><i class="ra"> 01</i></div><svg class="ex" viewBox="0 0 10 10" ><path d="M.9 .9l8.200 8.200M9.100 .9l-8.200 8.200" fill="none" stroke="currentColor" stroke-linecap="round" stroke-linejoin="round" stroke-width="1.200"/></svg><span class="bd"><svg class="bu" viewBox="0 0 14.8 10.6" ><circle cx="8.700" cy="2.750" r="2.150" fill="none" stroke="currentColor" stroke-linecap="round" stroke-linejoin="round" stroke-width="1.250"/><path d="M3.300 10.100c.1-2.400 2.400-3.800 5.400-3.800s5.300 1.400 5.400 3.800" fill="none" stroke="currentColor" stroke-linecap="round" stroke-linejoin="round" stroke-width="1.250"/><circle cx="4.300" cy="4.300" r="1.350" fill="none" stroke="currentColor" stroke-linecap="round" stroke-linejoin="round" stroke-width="1.250"/><path d="M.6 9.900c.1-1.500 1.100-2.500 2.700-2.700" fill="none" stroke="currentColor" stroke-linecap="round" stroke-linejoin="round" stroke-width="1.250"/></svg><b>0</b></span></div>
</div>
<div class="tc we"></div><div class="tc we"></div>
</div>
<div class="tr r2">
<div class="tc c0"><div class="gn">Α2 ΓΥΜΝΑΣΙΟΥ</div><div class="ga"><svg class="iban" viewBox="0 0 14 14" ><circle cx="7" cy="7" r="6.100" fill="none" stroke="currentColor" stroke-linecap="round" stroke-linejoin="round" stroke-width="1.350"/><path d="M2.800 2.800l8.400 8.400" fill="none" stroke="currentColor" stroke-linecap="round" stroke-linejoin="round" stroke-width="1.350"/></svg><svg class="ix" viewBox="0 0 10 10" ><path d="M.9 .9l8.200 8.200M9.100 .9l-8.200 8.200" fill="none" stroke="currentColor" stroke-linecap="round" stroke-linejoin="round" stroke-width="1.200"/></svg></div></div>
<div class="tc cd first">
<div class="ev"><div class="et"><span class="tm" style="font-size:14.568px;transform:scaleY(0.8409)">08:00-08:45</span> ΦΥΣΙΚΗ ΑΓΩΓΗ ΑΓ</div><div class="es">ΓΥΜΝΑΣΤΗΣ<i class="d1"> 1 / </i><i class="lc">Αίθουσα</i><i class="rb"> 02</i></div><svg class="ex" viewBox="0 0 10 10" ><path d="M.9 .9l8.200 8.200M9.100 .9l-8.200 8.200" fill="none" stroke="currentColor" stroke-linecap="round" stroke-linejoin="round" stroke-width="1.200"/></svg><span class="bd"><svg class="bu" viewBox="0 0 14.8 10.6" ><circle cx="8.700" cy="2.750" r="2.150" fill="none" stroke="currentColor" stroke-linecap="round" stroke-linejoin="round" stroke-width="1.250"/><path d="M3.300 10.100c.1-2.400 2.400-3.800 5.400-3.800s5.300 1.400 5.400 3.800" fill="none" stroke="currentColor" stroke-linecap="round" stroke-linejoin="round" stroke-width="1.250"/><circle cx="4.300" cy="4.300" r="1.350" fill="none" stroke="currentColor" stroke-linecap="round" stroke-linejoin="round" stroke-width="1.250"/><path d="M.6 9.900c.1-1.500 1.100-2.500 2.700-2.700" fill="none" stroke="currentColor" stroke-linecap="round" stroke-linejoin="round" stroke-width="1.250"/></svg><b>0</b></span></div>
<div class="ev"><div class="et"><span class="tm" style="font-size:14.289px;transform:scaleY(0.8573)">08:55-09:40</span> ΕΡΓΑΣΤΗΡΙ ΔΕΞΙΟΤΗΤΩΝ ΑΓ</div><div class="es">ΚΑΘ. ΠΛΗΡΟΦΟΡΙΚΗΣ<i class="dn"> 2 / </i><i class="lc">Αίθουσα</i><i class="rb"> 02</i></div><svg class="ex" viewBox="0 0 10 10" ><path d="M.9 .9l8.200 8.200M9.100 .9l-8.200 8.200" fill="none" stroke="currentColor" stroke-linecap="round" stroke-linejoin="round" stroke-width="1.200"/></svg><span class="bd"><svg class="bu" viewBox="0 0 14.8 10.6" ><circle cx="8.700" cy="2.750" r="2.150" fill="none" stroke="currentColor" stroke-linecap="round" stroke-linejoin="round" stroke-width="1.250"/><path d="M3.300 10.100c.1-2.400 2.400-3.800 5.400-3.800s5.300 1.400 5.400 3.800" fill="none" stroke="currentColor" stroke-linecap="round" stroke-linejoin="round" stroke-width="1.250"/><circle cx="4.300" cy="4.300" r="1.350" fill="none" stroke="currentColor" stroke-linecap="round" stroke-linejoin="round" stroke-width="1.250"/><path d="M.6 9.900c.1-1.500 1.100-2.500 2.700-2.700" fill="none" stroke="currentColor" stroke-linecap="round" stroke-linejoin="round" stroke-width="1.250"/></svg><b>0</b></span></div>
<div class="ev"><div class="et"><span class="tm" style="font-size:13.656px;transform:scaleY(0.8970)">09:50-10:35</span> ΟΙΚΙΑΚΗ ΟΙΚΟΝΟΜΙΑ ΑΓ</div><div class="es">ΚΟΙΝΩΝΙΟΛΟΓΟΣ<i class="d1"> 1 / </i><i class="lc">Αίθουσα</i><i class="rb"> 02</i></div><svg class="ex" viewBox="0 0 10 10" ><path d="M.9 .9l8.200 8.200M9.100 .9l-8.200 8.200" fill="none" stroke="currentColor" stroke-linecap="round" stroke-linejoin="round" stroke-width="1.200"/></svg><span class="bd"><svg class="bu" viewBox="0 0 14.8 10.6" ><circle cx="8.700" cy="2.750" r="2.150" fill="none" stroke="currentColor" stroke-linecap="round" stroke-linejoin="round" stroke-width="1.250"/><path d="M3.300 10.100c.1-2.400 2.400-3.800 5.400-3.800s5.300 1.400 5.400 3.800" fill="none" stroke="currentColor" stroke-linecap="round" stroke-linejoin="round" stroke-width="1.250"/><circle cx="4.300" cy="4.300" r="1.350" fill="none" stroke="currentColor" stroke-linecap="round" stroke-linejoin="round" stroke-width="1.250"/><path d="M.6 9.900c.1-1.500 1.100-2.500 2.700-2.700" fill="none" stroke="currentColor" stroke-linecap="round" stroke-linejoin="round" stroke-width="1.250"/></svg><b>0</b></span></div>
<div class="ev"><div class="et"><span class="tm" style="font-size:12.933px;transform:scaleY(0.9472)">10:45-11:30</span> ΤΕΧΝΟΛΟΓΙΑ ΑΓ</div><div class="es">ΚΑΘ. ΠΛΗΡΟΦΟΡΙΚΗΣ<i class="d1"> 1 / </i><i class="lc">Αίθουσα</i><i class="rb"> 02</i></div><svg class="ex" viewBox="0 0 10 10" ><path d="M.9 .9l8.200 8.200M9.100 .9l-8.200 8.200" fill="none" stroke="currentColor" stroke-linecap="round" stroke-linejoin="round" stroke-width="1.200"/></svg><span class="bd"><svg class="bu" viewBox="0 0 14.8 10.6" ><circle cx="8.700" cy="2.750" r="2.150" fill="none" stroke="currentColor" stroke-linecap="round" stroke-linejoin="round" stroke-width="1.250"/><path d="M3.300 10.100c.1-2.400 2.400-3.800 5.400-3.800s5.300 1.400 5.400 3.800" fill="none" stroke="currentColor" stroke-linecap="round" stroke-linejoin="round" stroke-width="1.250"/><circle cx="4.300" cy="4.300" r="1.350" fill="none" stroke="currentColor" stroke-linecap="round" stroke-linejoin="round" stroke-width="1.250"/><path d="M.6 9.900c.1-1.500 1.100-2.500 2.700-2.700" fill="none" stroke="currentColor" stroke-linecap="round" stroke-linejoin="round" stroke-width="1.250"/></svg><b>0</b></span></div>
<div class="ev"><div class="et"><span class="tm" style="font-size:12.839px;transform:scaleY(0.9541)">11:40-12:25</span> ΠΑΡ ΑΓ</div><div class="es">ΦΙΛΟΛΟΓΟΣ<i class="dn"> 4 / </i><i class="lc">Αίθουσα</i><i class="rb"> 02</i></div><svg class="ex" viewBox="0 0 10 10" ><path d="M.9 .9l8.200 8.200M9.100 .9l-8.200 8.200" fill="none" stroke="currentColor" stroke-linecap="round" stroke-linejoin="round" stroke-width="1.200"/></svg><span class="bd"><svg class="bu" viewBox="0 0 14.8 10.6" ><circle cx="8.700" cy="2.750" r="2.150" fill="none" stroke="currentColor" stroke-linecap="round" stroke-linejoin="round" stroke-width="1.250"/><path d="M3.300 10.100c.1-2.400 2.400-3.800 5.400-3.800s5.300 1.400 5.400 3.800" fill="none" stroke="currentColor" stroke-linecap="round" stroke-linejoin="round" stroke-width="1.250"/><circle cx="4.300" cy="4.300" r="1.350" fill="none" stroke="currentColor" stroke-linecap="round" stroke-linejoin="round" stroke-width="1.250"/><path d="M.6 9.900c.1-1.500 1.100-2.500 2.700-2.700" fill="none" stroke="currentColor" stroke-linecap="round" stroke-linejoin="round" stroke-width="1.250"/></svg><b>0</b></span></div>
<div class="ev"><div class="et"><span class="tm" style="font-size:13.154px;transform:scaleY(0.9313)">12:35-13:20</span> ΞΕΝΗ ΓΛΩΣΣΑ ΙΙ ΑΓ</div><div class="es">ΓΑΛΛΙΚΗ ΦΙΛΟΛΟΓΟΣ<i class="d1"> 1 / </i><i class="lc">Αίθουσα</i><i class="rb"> 02</i></div><svg class="ex" viewBox="0 0 10 10" ><path d="M.9 .9l8.200 8.200M9.100 .9l-8.200 8.200" fill="none" stroke="currentColor" stroke-linecap="round" stroke-linejoin="round" stroke-width="1.200"/></svg><span class="bd"><svg class="bu" viewBox="0 0 14.8 10.6" ><circle cx="8.700" cy="2.750" r="2.150" fill="none" stroke="currentColor" stroke-linecap="round" stroke-linejoin="round" stroke-width="1.250"/><path d="M3.300 10.100c.1-2.400 2.400-3.800 5.400-3.800s5.300 1.400 5.400 3.800" fill="none" stroke="currentColor" stroke-linecap="round" stroke-linejoin="round" stroke-width="1.250"/><circle cx="4.300" cy="4.300" r="1.350" fill="none" stroke="currentColor" stroke-linecap="round" stroke-linejoin="round" stroke-width="1.250"/><path d="M.6 9.900c.1-1.500 1.100-2.500 2.700-2.700" fill="none" stroke="currentColor" stroke-linecap="round" stroke-linejoin="round" stroke-width="1.250"/></svg><b>0</b></span></div>
</div>
<div class="tc cd">
<div class="ev"><div class="et"><span class="tm" style="font-size:14.568px;transform:scaleY(0.8409)">08:00-08:45</span> ΦΙΛΟΣΟΦΙΑ ΑΓ</div><div class="es">ΦΙΛΟΛΟΓΟΣ<i class="hy">-</i>ΓΥΜΝΑΣΙΑΡΧΗΣ<i class="dn"> / </i><i class="lc">Αίθουσα</i><i class="rb"> 02</i></div><svg class="ex" viewBox="0 0 10 10" ><path d="M.9 .9l8.200 8.200M9.100 .9l-8.200 8.200" fill="none" stroke="currentColor" stroke-linecap="round" stroke-linejoin="round" stroke-width="1.200"/></svg><span class="bd"><svg class="bu" viewBox="0 0 14.8 10.6" ><circle cx="8.700" cy="2.750" r="2.150" fill="none" stroke="currentColor" stroke-linecap="round" stroke-linejoin="round" stroke-width="1.250"/><path d="M3.300 10.100c.1-2.400 2.400-3.800 5.400-3.800s5.300 1.400 5.400 3.800" fill="none" stroke="currentColor" stroke-linecap="round" stroke-linejoin="round" stroke-width="1.250"/><circle cx="4.300" cy="4.300" r="1.350" fill="none" stroke="currentColor" stroke-linecap="round" stroke-linejoin="round" stroke-width="1.250"/><path d="M.6 9.900c.1-1.500 1.100-2.500 2.700-2.700" fill="none" stroke="currentColor" stroke-linecap="round" stroke-linejoin="round" stroke-width="1.250"/></svg><b>0</b></span></div>
<div class="ev"><div class="et"><span class="tm" style="font-size:14.289px;transform:scaleY(0.8573)">08:55-09:40</span> ΠΛΗΡΟΦΟΡΙΚΗ ΑΓ</div><div class="es">ΚΑΘ. ΠΛΗΡΟΦΟΡΙΚΗΣ<i class="dn"> 2 / </i><i class="lc">Αίθουσα</i><i class="rb"> 02</i></div><svg class="ex" viewBox="0 0 10 10" ><path d="M.9 .9l8.200 8.200M9.100 .9l-8.200 8.200" fill="none" stroke="currentColor" stroke-linecap="round" stroke-linejoin="round" stroke-width="1.200"/></svg><span class="bd"><svg class="bu" viewBox="0 0 14.8 10.6" ><circle cx="8.700" cy="2.750" r="2.150" fill="none" stroke="currentColor" stroke-linecap="round" stroke-linejoin="round" stroke-width="1.250"/><path d="M3.300 10.100c.1-2.400 2.400-3.800 5.400-3.800s5.300 1.400 5.400 3.800" fill="none" stroke="currentColor" stroke-linecap="round" stroke-linejoin="round" stroke-width="1.250"/><circle cx="4.300" cy="4.300" r="1.350" fill="none" stroke="currentColor" stroke-linecap="round" stroke-linejoin="round" stroke-width="1.250"/><path d="M.6 9.900c.1-1.500 1.100-2.500 2.700-2.700" fill="none" stroke="currentColor" stroke-linecap="round" stroke-linejoin="round" stroke-width="1.250"/></svg><b>0</b></span></div>
<div class="ev"><div class="et"><span class="tm" style="font-size:13.656px;transform:scaleY(0.8970)">09:50-10:35</span> ΑΡΧΑΙΑ ΜΕΤΑΦΡΑΣΗ ΑΓ</div><div class="es">ΦΙΛΟΛΟΓΟΣ<i class="dn"> 3 / </i><i class="lc">Αίθουσα</i><i class="rb"> 02</i></div><svg class="ex" viewBox="0 0 10 10" ><path d="M.9 .9l8.200 8.200M9.100 .9l-8.200 8.200" fill="none" stroke="currentColor" stroke-linecap="round" stroke-linejoin="round" stroke-width="1.200"/></svg><span class="bd"><svg class="bu" viewBox="0 0 14.8 10.6" ><circle cx="8.700" cy="2.750" r="2.150" fill="none" stroke="currentColor" stroke-linecap="round" stroke-linejoin="round" stroke-width="1.250"/><path d="M3.300 10.100c.1-2.400 2.400-3.800 5.400-3.800s5.300 1.400 5.400 3.800" fill="none" stroke="currentColor" stroke-linecap="round" stroke-linejoin="round" stroke-width="1.250"/><circle cx="4.300" cy="4.300" r="1.350" fill="none" stroke="currentColor" stroke-linecap="round" stroke-linejoin="round" stroke-width="1.250"/><path d="M.6 9.900c.1-1.500 1.100-2.500 2.700-2.700" fill="none" stroke="currentColor" stroke-linecap="round" stroke-linejoin="round" stroke-width="1.250"/></svg><b>0</b></span></div>
<div class="ev"><div class="et"><span class="tm" style="font-size:12.933px;transform:scaleY(0.9472)">10:45-11:30</span> ΒΙΟΛΟΓΙΑ ΑΓ</div><div class="es">ΦΥΣΙΚΟΣ<i class="d1"> 1 / </i><i class="lc">Αίθουσα</i><i class="rb"> 02</i></div><svg class="ex" viewBox="0 0 10 10" ><path d="M.9 .9l8.200 8.200M9.100 .9l-8.200 8.200" fill="none" stroke="currentColor" stroke-linecap="round" stroke-linejoin="round" stroke-width="1.200"/></svg><span class="bd"><svg class="bu" viewBox="0 0 14.8 10.6" ><circle cx="8.700" cy="2.750" r="2.150" fill="none" stroke="currentColor" stroke-linecap="round" stroke-linejoin="round" stroke-width="1.250"/><path d="M3.300 10.100c.1-2.400 2.400-3.800 5.400-3.800s5.300 1.400 5.400 3.800" fill="none" stroke="currentColor" stroke-linecap="round" stroke-linejoin="round" stroke-width="1.250"/><circle cx="4.300" cy="4.300" r="1.350" fill="none" stroke="currentColor" stroke-linecap="round" stroke-linejoin="round" stroke-width="1.250"/><path d="M.6 9.900c.1-1.500 1.100-2.500 2.700-2.700" fill="none" stroke="currentColor" stroke-linecap="round" stroke-linejoin="round" stroke-width="1.250"/></svg><b>0</b></span></div>
<div class="ev"><div class="et"><span class="tm" style="font-size:12.839px;transform:scaleY(0.9541)">11:40-12:25</span> ΚΑΛΛΙΤΕΧΝΙΚΑ ΑΓ</div><div class="es">ΚΑΛΛΙΤΕΧΝΙΚΟΣ<i class="d1"> 1 / </i><i class="lc">Αίθουσα</i><i class="rb"> 02</i></div><svg class="ex" viewBox="0 0 10 10" ><path d="M.9 .9l8.200 8.200M9.100 .9l-8.200 8.200" fill="none" stroke="currentColor" stroke-linecap="round" stroke-linejoin="round" stroke-width="1.200"/></svg><span class="bd"><svg class="bu" viewBox="0 0 14.8 10.6" ><circle cx="8.700" cy="2.750" r="2.150" fill="none" stroke="currentColor" stroke-linecap="round" stroke-linejoin="round" stroke-width="1.250"/><path d="M3.300 10.100c.1-2.400 2.400-3.800 5.400-3.800s5.300 1.400 5.400 3.800" fill="none" stroke="currentColor" stroke-linecap="round" stroke-linejoin="round" stroke-width="1.250"/><circle cx="4.300" cy="4.300" r="1.350" fill="none" stroke="currentColor" stroke-linecap="round" stroke-linejoin="round" stroke-width="1.250"/><path d="M.6 9.900c.1-1.500 1.100-2.500 2.700-2.700" fill="none" stroke="currentColor" stroke-linecap="round" stroke-linejoin="round" stroke-width="1.250"/></svg><b>0</b></span></div>
<div class="ev"><div class="et"><span class="tm" style="font-size:13.154px;transform:scaleY(0.9313)">12:35-13:20</span> ΜΑΘΗΜΑΤΙΚΑ ΑΓ</div><div class="es">ΜΑΘΗΜΑΤΙΚΟΣ<i class="d1"> 1 / </i><i class="lc">Αίθουσα</i><i class="rb"> 02</i></div><svg class="ex" viewBox="0 0 10 10" ><path d="M.9 .9l8.200 8.200M9.100 .9l-8.200 8.200" fill="none" stroke="currentColor" stroke-linecap="round" stroke-linejoin="round" stroke-width="1.200"/></svg><span class="bd"><svg class="bu" viewBox="0 0 14.8 10.6" ><circle cx="8.700" cy="2.750" r="2.150" fill="none" stroke="currentColor" stroke-linecap="round" stroke-linejoin="round" stroke-width="1.250"/><path d="M3.300 10.100c.1-2.400 2.400-3.800 5.400-3.800s5.300 1.400 5.400 3.800" fill="none" stroke="currentColor" stroke-linecap="round" stroke-linejoin="round" stroke-width="1.250"/><circle cx="4.300" cy="4.300" r="1.350" fill="none" stroke="currentColor" stroke-linecap="round" stroke-linejoin="round" stroke-width="1.250"/><path d="M.6 9.900c.1-1.500 1.100-2.500 2.700-2.700" fill="none" stroke="currentColor" stroke-linecap="round" stroke-linejoin="round" stroke-width="1.250"/></svg><b>0</b></span></div>
</div>
<div class="tc cd">
<div class="ev"><div class="et"><span class="tm" style="font-size:14.568px;transform:scaleY(0.8409)">08:00-08:45</span> ΞΕΝΗ ΓΛΩΣΣΑ Ι ΑΓ</div><div class="es">ΑΓΓΛΙΚΗ ΦΙΛΟΛΟΓΟΣ<i class="d1"> 1 / </i><i class="lc">Αίθουσα</i><i class="rb"> 02</i></div><svg class="ex" viewBox="0 0 10 10" ><path d="M.9 .9l8.200 8.200M9.100 .9l-8.200 8.200" fill="none" stroke="currentColor" stroke-linecap="round" stroke-linejoin="round" stroke-width="1.200"/></svg><span class="bd"><svg class="bu" viewBox="0 0 14.8 10.6" ><circle cx="8.700" cy="2.750" r="2.150" fill="none" stroke="currentColor" stroke-linecap="round" stroke-linejoin="round" stroke-width="1.250"/><path d="M3.300 10.100c.1-2.400 2.400-3.800 5.400-3.800s5.300 1.400 5.400 3.800" fill="none" stroke="currentColor" stroke-linecap="round" stroke-linejoin="round" stroke-width="1.250"/><circle cx="4.300" cy="4.300" r="1.350" fill="none" stroke="currentColor" stroke-linecap="round" stroke-linejoin="round" stroke-width="1.250"/><path d="M.6 9.900c.1-1.500 1.100-2.500 2.700-2.700" fill="none" stroke="currentColor" stroke-linecap="round" stroke-linejoin="round" stroke-width="1.250"/></svg><b>0</b></span></div>
<div class="ev"><div class="et"><span class="tm" style="font-size:14.289px;transform:scaleY(0.8573)">08:55-09:40</span> ΜΑΘΗΜΑΤΙΚΑ ΑΓ</div><div class="es">ΜΑΘΗΜΑΤΙΚΟΣ<i class="d1"> 1 / </i><i class="lc">Αίθουσα</i><i class="rb"> 02</i></div><svg class="ex" viewBox="0 0 10 10" ><path d="M.9 .9l8.200 8.200M9.100 .9l-8.200 8.200" fill="none" stroke="currentColor" stroke-linecap="round" stroke-linejoin="round" stroke-width="1.200"/></svg><span class="bd"><svg class="bu" viewBox="0 0 14.8 10.6" ><circle cx="8.700" cy="2.750" r="2.150" fill="none" stroke="currentColor" stroke-linecap="round" stroke-linejoin="round" stroke-width="1.250"/><path d="M3.300 10.100c.1-2.400 2.400-3.800 5.400-3.800s5.300 1.400 5.400 3.800" fill="none" stroke="currentColor" stroke-linecap="round" stroke-linejoin="round" stroke-width="1.250"/><circle cx="4.300" cy="4.300" r="1.350" fill="none" stroke="currentColor" stroke-linecap="round" stroke-linejoin="round" stroke-width="1.250"/><path d="M.6 9.900c.1-1.500 1.100-2.500 2.700-2.700" fill="none" stroke="currentColor" stroke-linecap="round" stroke-linejoin="round" stroke-width="1.250"/></svg><b>0</b></span></div>
<div class="ev"><div class="et"><span class="tm" style="font-size:13.656px;transform:scaleY(0.8970)">09:50-10:35</span> ΜΟΥΣΙΚΗ ΑΓ</div><div class="es">ΜΟΥΣΙΚΟΣ<i class="d1"> 1 / </i><i class="lc">Αίθουσα</i><i class="rb"> 02</i></div><svg class="ex" viewBox="0 0 10 10" ><path d="M.9 .9l8.200 8.200M9.100 .9l-8.200 8.200" fill="none" stroke="currentColor" stroke-linecap="round" stroke-linejoin="round" stroke-width="1.200"/></svg><span class="bd"><svg class="bu" viewBox="0 0 14.8 10.6" ><circle cx="8.700" cy="2.750" r="2.150" fill="none" stroke="currentColor" stroke-linecap="round" stroke-linejoin="round" stroke-width="1.250"/><path d="M3.300 10.100c.1-2.400 2.400-3.800 5.400-3.800s5.300 1.400 5.400 3.800" fill="none" stroke="currentColor" stroke-linecap="round" stroke-linejoin="round" stroke-width="1.250"/><circle cx="4.300" cy="4.300" r="1.350" fill="none" stroke="currentColor" stroke-linecap="round" stroke-linejoin="round" stroke-width="1.250"/><path d="M.6 9.900c.1-1.500 1.100-2.500 2.700-2.700" fill="none" stroke="currentColor" stroke-linecap="round" stroke-linejoin="round" stroke-width="1.250"/></svg><b>0</b></span></div>
<div class="ev"><div class="et"><span class="tm" style="font-size:12.933px;transform:scaleY(0.9472)">10:45-11:30</span> ΘΡΗΣΚΕΥΤΙΚΑ ΑΓ</div><div class="es">ΘΕΟΛΟΓΟΣ<i class="d1"> 1 / </i><i class="lc">Αίθουσα</i><i class="rb"> 02</i></div><svg class="ex" viewBox="0 0 10 10" ><path d="M.9 .9l8.200 8.200M9.100 .9l-8.200 8.200" fill="none" stroke="currentColor" stroke-linecap="round" stroke-linejoin="round" stroke-width="1.200"/></svg><span class="bd"><svg class="bu" viewBox="0 0 14.8 10.6" ><circle cx="8.700" cy="2.750" r="2.150" fill="none" stroke="currentColor" stroke-linecap="round" stroke-linejoin="round" stroke-width="1.250"/><path d="M3.300 10.100c.1-2.400 2.400-3.800 5.400-3.800s5.300 1.400 5.400 3.800" fill="none" stroke="currentColor" stroke-linecap="round" stroke-linejoin="round" stroke-width="1.250"/><circle cx="4.300" cy="4.300" r="1.350" fill="none" stroke="currentColor" stroke-linecap="round" stroke-linejoin="round" stroke-width="1.250"/><path d="M.6 9.900c.1-1.500 1.100-2.500 2.700-2.700" fill="none" stroke="currentColor" stroke-linecap="round" stroke-linejoin="round" stroke-width="1.250"/></svg><b>0</b></span></div>
<div class="ev"><div class="et"><span class="tm" style="font-size:12.839px;transform:scaleY(0.9541)">11:40-12:25</span> ΑΡΧΑΙΑ ΜΕΤΑΦΡΑΣΗ ΑΓ</div><div class="es">ΦΙΛΟΛΟΓΟΣ<i class="dn"> 4 / </i><i class="lc">Αίθουσα</i><i class="rb"> 02</i></div><svg class="ex" viewBox="0 0 10 10" ><path d="M.9 .9l8.200 8.200M9.100 .9l-8.200 8.200" fill="none" stroke="currentColor" stroke-linecap="round" stroke-linejoin="round" stroke-width="1.200"/></svg><span class="bd"><svg class="bu" viewBox="0 0 14.8 10.6" ><circle cx="8.700" cy="2.750" r="2.150" fill="none" stroke="currentColor" stroke-linecap="round" stroke-linejoin="round" stroke-width="1.250"/><path d="M3.300 10.100c.1-2.400 2.400-3.800 5.400-3.800s5.300 1.400 5.400 3.800" fill="none" stroke="currentColor" stroke-linecap="round" stroke-linejoin="round" stroke-width="1.250"/><circle cx="4.300" cy="4.300" r="1.350" fill="none" stroke="currentColor" stroke-linecap="round" stroke-linejoin="round" stroke-width="1.250"/><path d="M.6 9.900c.1-1.500 1.100-2.500 2.700-2.700" fill="none" stroke="currentColor" stroke-linecap="round" stroke-linejoin="round" stroke-width="1.250"/></svg><b>0</b></span></div>
<div class="ev"><div class="et"><span class="tm" style="font-size:13.154px;transform:scaleY(0.9313)">12:35-13:20</span> ΞΕΝΗ ΓΛΩΣΣΑ ΙΙ ΑΓ</div><div class="es">ΓΑΛΛΙΚΗ ΦΙΛΟΛΟΓΟΣ<i class="d1"> 1 / </i><i class="lc">Αίθουσα</i><i class="rb"> 02</i></div><svg class="ex" viewBox="0 0 10 10" ><path d="M.9 .9l8.200 8.200M9.100 .9l-8.200 8.200" fill="none" stroke="currentColor" stroke-linecap="round" stroke-linejoin="round" stroke-width="1.200"/></svg><span class="bd"><svg class="bu" viewBox="0 0 14.8 10.6" ><circle cx="8.700" cy="2.750" r="2.150" fill="none" stroke="currentColor" stroke-linecap="round" stroke-linejoin="round" stroke-width="1.250"/><path d="M3.300 10.100c.1-2.400 2.400-3.800 5.400-3.800s5.300 1.400 5.400 3.800" fill="none" stroke="currentColor" stroke-linecap="round" stroke-linejoin="round" stroke-width="1.250"/><circle cx="4.300" cy="4.300" r="1.350" fill="none" stroke="currentColor" stroke-linecap="round" stroke-linejoin="round" stroke-width="1.250"/><path d="M.6 9.900c.1-1.500 1.100-2.500 2.700-2.700" fill="none" stroke="currentColor" stroke-linecap="round" stroke-linejoin="round" stroke-width="1.250"/></svg><b>0</b></span></div>
</div>
<div class="tc cd">
<div class="ev"><div class="et"><span class="tm" style="font-size:14.568px;transform:scaleY(0.8409)">08:00-08:45</span> ΜΑΘΗΜΑΤΙΚΑ ΑΓ</div><div class="es">ΜΑΘΗΜΑΤΙΚΟΣ<i class="dn"> 2 / </i><i class="lc">Αίθουσα</i><i class="rb"> 02</i></div><svg class="ex" viewBox="0 0 10 10" ><path d="M.9 .9l8.200 8.200M9.100 .9l-8.200 8.200" fill="none" stroke="currentColor" stroke-linecap="round" stroke-linejoin="round" stroke-width="1.200"/></svg><span class="bd"><svg class="bu" viewBox="0 0 14.8 10.6" ><circle cx="8.700" cy="2.750" r="2.150" fill="none" stroke="currentColor" stroke-linecap="round" stroke-linejoin="round" stroke-width="1.250"/><path d="M3.300 10.100c.1-2.400 2.400-3.800 5.400-3.800s5.300 1.400 5.400 3.800" fill="none" stroke="currentColor" stroke-linecap="round" stroke-linejoin="round" stroke-width="1.250"/><circle cx="4.300" cy="4.300" r="1.350" fill="none" stroke="currentColor" stroke-linecap="round" stroke-linejoin="round" stroke-width="1.250"/><path d="M.6 9.900c.1-1.500 1.100-2.500 2.700-2.700" fill="none" stroke="currentColor" stroke-linecap="round" stroke-linejoin="round" stroke-width="1.250"/></svg><b>0</b></span></div>
<div class="ev"><div class="et"><span class="tm" style="font-size:14.289px;transform:scaleY(0.8573)">08:55-09:40</span> ΑΡΧΑΙΑ ΠΡΩΤΟΤΥΠΟ ΑΓ</div><div class="es">ΦΙΛΟΛΟΓΟΣ<i class="hy">-</i>ΛΥΚΕΙΑΡΧΗΣ<i class="dn"> / </i><i class="lc">Αίθουσα</i><i class="rb"> 02</i></div><svg class="ex" viewBox="0 0 10 10" ><path d="M.9 .9l8.200 8.200M9.100 .9l-8.200 8.200" fill="none" stroke="currentColor" stroke-linecap="round" stroke-linejoin="round" stroke-width="1.200"/></svg><span class="bd"><svg class="bu" viewBox="0 0 14.8 10.6" ><circle cx="8.700" cy="2.750" r="2.150" fill="none" stroke="currentColor" stroke-linecap="round" stroke-linejoin="round" stroke-width="1.250"/><path d="M3.300 10.100c.1-2.400 2.400-3.800 5.400-3.800s5.300 1.400 5.400 3.800" fill="none" stroke="currentColor" stroke-linecap="round" stroke-linejoin="round" stroke-width="1.250"/><circle cx="4.300" cy="4.300" r="1.350" fill="none" stroke="currentColor" stroke-linecap="round" stroke-linejoin="round" stroke-width="1.250"/><path d="M.6 9.900c.1-1.500 1.100-2.500 2.700-2.700" fill="none" stroke="currentColor" stroke-linecap="round" stroke-linejoin="round" stroke-width="1.250"/></svg><b>0</b></span></div>
<div class="ev"><div class="et"><span class="tm" style="font-size:13.656px;transform:scaleY(0.8970)">09:50-10:35</span> ΘΡΗΣΚΕΥΤΙΚΑ ΑΓ</div><div class="es">ΘΕΟΛΟΓΟΣ<i class="d1"> 1 / </i><i class="lc">Αίθουσα</i><i class="rb"> 02</i></div><svg class="ex" viewBox="0 0 10 10" ><path d="M.9 .9l8.200 8.200M9.100 .9l-8.200 8.200" fill="none" stroke="currentColor" stroke-linecap="round" stroke-linejoin="round" stroke-width="1.200"/></svg><span class="bd"><svg class="bu" viewBox="0 0 14.8 10.6" ><circle cx="8.700" cy="2.750" r="2.150" fill="none" stroke="currentColor" stroke-linecap="round" stroke-linejoin="round" stroke-width="1.250"/><path d="M3.300 10.100c.1-2.400 2.400-3.800 5.400-3.800s5.300 1.400 5.400 3.800" fill="none" stroke="currentColor" stroke-linecap="round" stroke-linejoin="round" stroke-width="1.250"/><circle cx="4.300" cy="4.300" r="1.350" fill="none" stroke="currentColor" stroke-linecap="round" stroke-linejoin="round" stroke-width="1.250"/><path d="M.6 9.900c.1-1.500 1.100-2.500 2.700-2.700" fill="none" stroke="currentColor" stroke-linecap="round" stroke-linejoin="round" stroke-width="1.250"/></svg><b>0</b></span></div>
<div class="ev"><div class="et"><span class="tm" style="font-size:12.933px;transform:scaleY(0.9472)">10:45-11:30</span> ΓΕΩΓΡΑΦΙΑ ΑΓ</div><div class="es">ΦΥΣΙΚΟΣ<i class="d1"> 1 / </i><i class="lc">Αίθουσα</i><i class="rb"> 02</i></div><svg class="ex" viewBox="0 0 10 10" ><path d="M.9 .9l8.200 8.200M9.100 .9l-8.200 8.200" fill="none" stroke="currentColor" stroke-linecap="round" stroke-linejoin="round" stroke-width="1.200"/></svg><span class="bd"><svg class="bu" viewBox="0 0 14.8 10.6" ><circle cx="8.700" cy="2.750" r="2.150" fill="none" stroke="currentColor" stroke-linecap="round" stroke-linejoin="round" stroke-width="1.250"/><path d="M3.300 10.100c.1-2.400 2.400-3.800 5.400-3.800s5.300 1.400 5.400 3.800" fill="none" stroke="currentColor" stroke-linecap="round" stroke-linejoin="round" stroke-width="1.250"/><circle cx="4.300" cy="4.300" r="1.350" fill="none" stroke="currentColor" stroke-linecap="round" stroke-linejoin="round" stroke-width="1.250"/><path d="M.6 9.900c.1-1.500 1.100-2.500 2.700-2.700" fill="none" stroke="currentColor" stroke-linecap="round" stroke-linejoin="round" stroke-width="1.250"/></svg><b>0</b></span></div>
<div class="ev"><div class="et"><span class="tm" style="font-size:12.839px;transform:scaleY(0.9541)">11:40-12:25</span> ΙΣΤΟΡΙΑ ΑΓ</div><div class="es">ΦΙΛΟΛΟΓΟΣ<i class="dn"> 5 / </i><i class="lc">Αίθουσα</i><i class="rb"> 02</i></div><svg class="ex" viewBox="0 0 10 10" ><path d="M.9 .9l8.200 8.200M9.100 .9l-8.200 8.200" fill="none" stroke="currentColor" stroke-linecap="round" stroke-linejoin="round" stroke-width="1.200"/></svg><span class="bd"><svg class="bu" viewBox="0 0 14.8 10.6" ><circle cx="8.700" cy="2.750" r="2.150" fill="none" stroke="currentColor" stroke-linecap="round" stroke-linejoin="round" stroke-width="1.250"/><path d="M3.300 10.100c.1-2.400 2.400-3.800 5.400-3.800s5.300 1.400 5.400 3.800" fill="none" stroke="currentColor" stroke-linecap="round" stroke-linejoin="round" stroke-width="1.250"/><circle cx="4.300" cy="4.300" r="1.350" fill="none" stroke="currentColor" stroke-linecap="round" stroke-linejoin="round" stroke-width="1.250"/><path d="M.6 9.900c.1-1.500 1.100-2.500 2.700-2.700" fill="none" stroke="currentColor" stroke-linecap="round" stroke-linejoin="round" stroke-width="1.250"/></svg><b>0</b></span></div>
<div class="ev"><div class="et"><span class="tm" style="font-size:13.154px;transform:scaleY(0.9313)">12:35-13:20</span> ΝΕΟΕΛ. ΛΟΓΟΤΕΧΝΙΑ ΑΓ</div><div class="es">ΦΙΛΟΛΟΓΟΣ<i class="dn"> 2 / </i><i class="lc">Αίθουσα</i><i class="rb"> 02</i></div><svg class="ex" viewBox="0 0 10 10" ><path d="M.9 .9l8.200 8.200M9.100 .9l-8.200 8.200" fill="none" stroke="currentColor" stroke-linecap="round" stroke-linejoin="round" stroke-width="1.200"/></svg><span class="bd"><svg class="bu" viewBox="0 0 14.8 10.6" ><circle cx="8.700" cy="2.750" r="2.150" fill="none" stroke="currentColor" stroke-linecap="round" stroke-linejoin="round" stroke-width="1.250"/><path d="M3.300 10.100c.1-2.400 2.400-3.800 5.400-3.800s5.300 1.400 5.400 3.800" fill="none" stroke="currentColor" stroke-linecap="round" stroke-linejoin="round" stroke-width="1.250"/><circle cx="4.300" cy="4.300" r="1.350" fill="none" stroke="currentColor" stroke-linecap="round" stroke-linejoin="round" stroke-width="1.250"/><path d="M.6 9.900c.1-1.500 1.100-2.500 2.700-2.700" fill="none" stroke="currentColor" stroke-linecap="round" stroke-linejoin="round" stroke-width="1.250"/></svg><b>0</b></span></div>
</div>
<div class="tc cd">
<div class="ev"><div class="et"><span class="tm" style="font-size:14.568px;transform:scaleY(0.8409)">08:00-08:45</span> ΙΣΤΟΡΙΑ ΑΓ</div><div class="es">ΦΙΛΟΛΟΓΟΣ<i class="dn"> 6 / </i><i class="lc">Αίθουσα</i><i class="rb"> 02</i></div><svg class="ex" viewBox="0 0 10 10" ><path d="M.9 .9l8.200 8.200M9.100 .9l-8.200 8.200" fill="none" stroke="currentColor" stroke-linecap="round" stroke-linejoin="round" stroke-width="1.200"/></svg><span class="bd"><svg class="bu" viewBox="0 0 14.8 10.6" ><circle cx="8.700" cy="2.750" r="2.150" fill="none" stroke="currentColor" stroke-linecap="round" stroke-linejoin="round" stroke-width="1.250"/><path d="M3.300 10.100c.1-2.400 2.400-3.800 5.400-3.800s5.300 1.400 5.400 3.800" fill="none" stroke="currentColor" stroke-linecap="round" stroke-linejoin="round" stroke-width="1.250"/><circle cx="4.300" cy="4.300" r="1.350" fill="none" stroke="currentColor" stroke-linecap="round" stroke-linejoin="round" stroke-width="1.250"/><path d="M.6 9.900c.1-1.500 1.100-2.500 2.700-2.700" fill="none" stroke="currentColor" stroke-linecap="round" stroke-linejoin="round" stroke-width="1.250"/></svg><b>0</b></span></div>
<div class="ev"><div class="et"><span class="tm" style="font-size:14.289px;transform:scaleY(0.8573)">08:55-09:40</span> ΜΑΘΗΜΑΤΙΚΑ ΑΓ</div><div class="es">ΜΑΘΗΜΑΤΙΚΟΣ<i class="dn"> 2 / </i><i class="lc">Αίθουσα</i><i class="rb"> 02</i></div><svg class="ex" viewBox="0 0 10 10" ><path d="M.9 .9l8.200 8.200M9.100 .9l-8.200 8.200" fill="none" stroke="currentColor" stroke-linecap="round" stroke-linejoin="round" stroke-width="1.200"/></svg><span class="bd"><svg class="bu" viewBox="0 0 14.8 10.6" ><circle cx="8.700" cy="2.750" r="2.150" fill="none" stroke="currentColor" stroke-linecap="round" stroke-linejoin="round" stroke-width="1.250"/><path d="M3.300 10.100c.1-2.400 2.400-3.800 5.400-3.800s5.300 1.400 5.400 3.800" fill="none" stroke="currentColor" stroke-linecap="round" stroke-linejoin="round" stroke-width="1.250"/><circle cx="4.300" cy="4.300" r="1.350" fill="none" stroke="currentColor" stroke-linecap="round" stroke-linejoin="round" stroke-width="1.250"/><path d="M.6 9.900c.1-1.500 1.100-2.500 2.700-2.700" fill="none" stroke="currentColor" stroke-linecap="round" stroke-linejoin="round" stroke-width="1.250"/></svg><b>0</b></span></div>
<div class="ev"><div class="et"><span class="tm" style="font-size:13.656px;transform:scaleY(0.8970)">09:50-10:35</span> ΝΕΟΕΛ. ΛΟΓΟΤΕΧΝΙΑ ΑΓ</div><div class="es">ΦΙΛΟΛΟΓΟΣ<i class="dn"> 5 / </i><i class="lc">Αίθουσα</i><i class="rb"> 02</i></div><svg class="ex" viewBox="0 0 10 10" ><path d="M.9 .9l8.200 8.200M9.100 .9l-8.200 8.200" fill="none" stroke="currentColor" stroke-linecap="round" stroke-linejoin="round" stroke-width="1.200"/></svg><span class="bd"><svg class="bu" viewBox="0 0 14.8 10.6" ><circle cx="8.700" cy="2.750" r="2.150" fill="none" stroke="currentColor" stroke-linecap="round" stroke-linejoin="round" stroke-width="1.250"/><path d="M3.300 10.100c.1-2.400 2.400-3.800 5.400-3.800s5.300 1.400 5.400 3.800" fill="none" stroke="currentColor" stroke-linecap="round" stroke-linejoin="round" stroke-width="1.250"/><circle cx="4.300" cy="4.300" r="1.350" fill="none" stroke="currentColor" stroke-linecap="round" stroke-linejoin="round" stroke-width="1.250"/><path d="M.6 9.900c.1-1.500 1.100-2.500 2.700-2.700" fill="none" stroke="currentColor" stroke-linecap="round" stroke-linejoin="round" stroke-width="1.250"/></svg><b>0</b></span></div>
<div class="ev"><div class="et"><span class="tm" style="font-size:12.933px;transform:scaleY(0.9472)">10:45-11:30</span> ΝΕΟΕΛ. ΓΛΩΣΣΑ ΑΓ</div><div class="es">ΦΙΛΟΛΟΓΟΣ<i class="dn"> 3 / </i><i class="lc">Αίθουσα</i><i class="rb"> 02</i></div><svg class="ex" viewBox="0 0 10 10" ><path d="M.9 .9l8.200 8.200M9.100 .9l-8.200 8.200" fill="none" stroke="currentColor" stroke-linecap="round" stroke-linejoin="round" stroke-width="1.200"/></svg><span class="bd"><svg class="bu" viewBox="0 0 14.8 10.6" ><circle cx="8.700" cy="2.750" r="2.150" fill="none" stroke="currentColor" stroke-linecap="round" stroke-linejoin="round" stroke-width="1.250"/><path d="M3.300 10.100c.1-2.400 2.400-3.800 5.400-3.800s5.300 1.400 5.400 3.800" fill="none" stroke="currentColor" stroke-linecap="round" stroke-linejoin="round" stroke-width="1.250"/><circle cx="4.300" cy="4.300" r="1.350" fill="none" stroke="currentColor" stroke-linecap="round" stroke-linejoin="round" stroke-width="1.250"/><path d="M.6 9.900c.1-1.500 1.100-2.500 2.700-2.700" fill="none" stroke="currentColor" stroke-linecap="round" stroke-linejoin="round" stroke-width="1.250"/></svg><b>0</b></span></div>
<div class="ev"><div class="et"><span class="tm" style="font-size:12.839px;transform:scaleY(0.9541)">11:40-12:25</span> ΝΕΟΕΛ. ΓΛΩΣΣΑ ΑΓ</div><div class="es">ΦΙΛΟΛΟΓΟΣ<i class="dn"> 5 / </i><i class="lc">Αίθουσα</i><i class="rb"> 02</i></div><svg class="ex" viewBox="0 0 10 10" ><path d="M.9 .9l8.200 8.200M9.100 .9l-8.200 8.200" fill="none" stroke="currentColor" stroke-linecap="round" stroke-linejoin="round" stroke-width="1.200"/></svg><span class="bd"><svg class="bu" viewBox="0 0 14.8 10.6" ><circle cx="8.700" cy="2.750" r="2.150" fill="none" stroke="currentColor" stroke-linecap="round" stroke-linejoin="round" stroke-width="1.250"/><path d="M3.300 10.100c.1-2.400 2.400-3.800 5.400-3.800s5.300 1.400 5.400 3.800" fill="none" stroke="currentColor" stroke-linecap="round" stroke-linejoin="round" stroke-width="1.250"/><circle cx="4.300" cy="4.300" r="1.350" fill="none" stroke="currentColor" stroke-linecap="round" stroke-linejoin="round" stroke-width="1.250"/><path d="M.6 9.900c.1-1.500 1.100-2.500 2.700-2.700" fill="none" stroke="currentColor" stroke-linecap="round" stroke-linejoin="round" stroke-width="1.250"/></svg><b>0</b></span></div>
<div class="ev"><div class="et"><span class="tm" style="font-size:13.154px;transform:scaleY(0.9313)">12:35-13:20</span> ΝΕΟΕΛ. ΓΛΩΣΣΑ ΑΓ</div><div class="es">ΦΙΛΟΛΟΓΟΣ<i class="dn"> 6 / </i><i class="lc">Αίθουσα</i><i class="rb"> 02</i></div><svg class="ex" viewBox="0 0 10 10" ><path d="M.9 .9l8.200 8.200M9.100 .9l-8.200 8.200" fill="none" stroke="currentColor" stroke-linecap="round" stroke-linejoin="round" stroke-width="1.200"/></svg><span class="bd"><svg class="bu" viewBox="0 0 14.8 10.6" ><circle cx="8.700" cy="2.750" r="2.150" fill="none" stroke="currentColor" stroke-linecap="round" stroke-linejoin="round" stroke-width="1.250"/><path d="M3.300 10.100c.1-2.400 2.400-3.800 5.400-3.800s5.300 1.400 5.400 3.800" fill="none" stroke="currentColor" stroke-linecap="round" stroke-linejoin="round" stroke-width="1.250"/><circle cx="4.300" cy="4.300" r="1.350" fill="none" stroke="currentColor" stroke-linecap="round" stroke-linejoin="round" stroke-width="1.250"/><path d="M.6 9.900c.1-1.500 1.100-2.500 2.700-2.700" fill="none" stroke="currentColor" stroke-linecap="round" stroke-linejoin="round" stroke-width="1.250"/></svg><b>0</b></span></div>
</div>
<div class="tc we"></div><div class="tc we"></div>
</div>
</div>
<div class="wl"></div>
</div>
</body></html>
